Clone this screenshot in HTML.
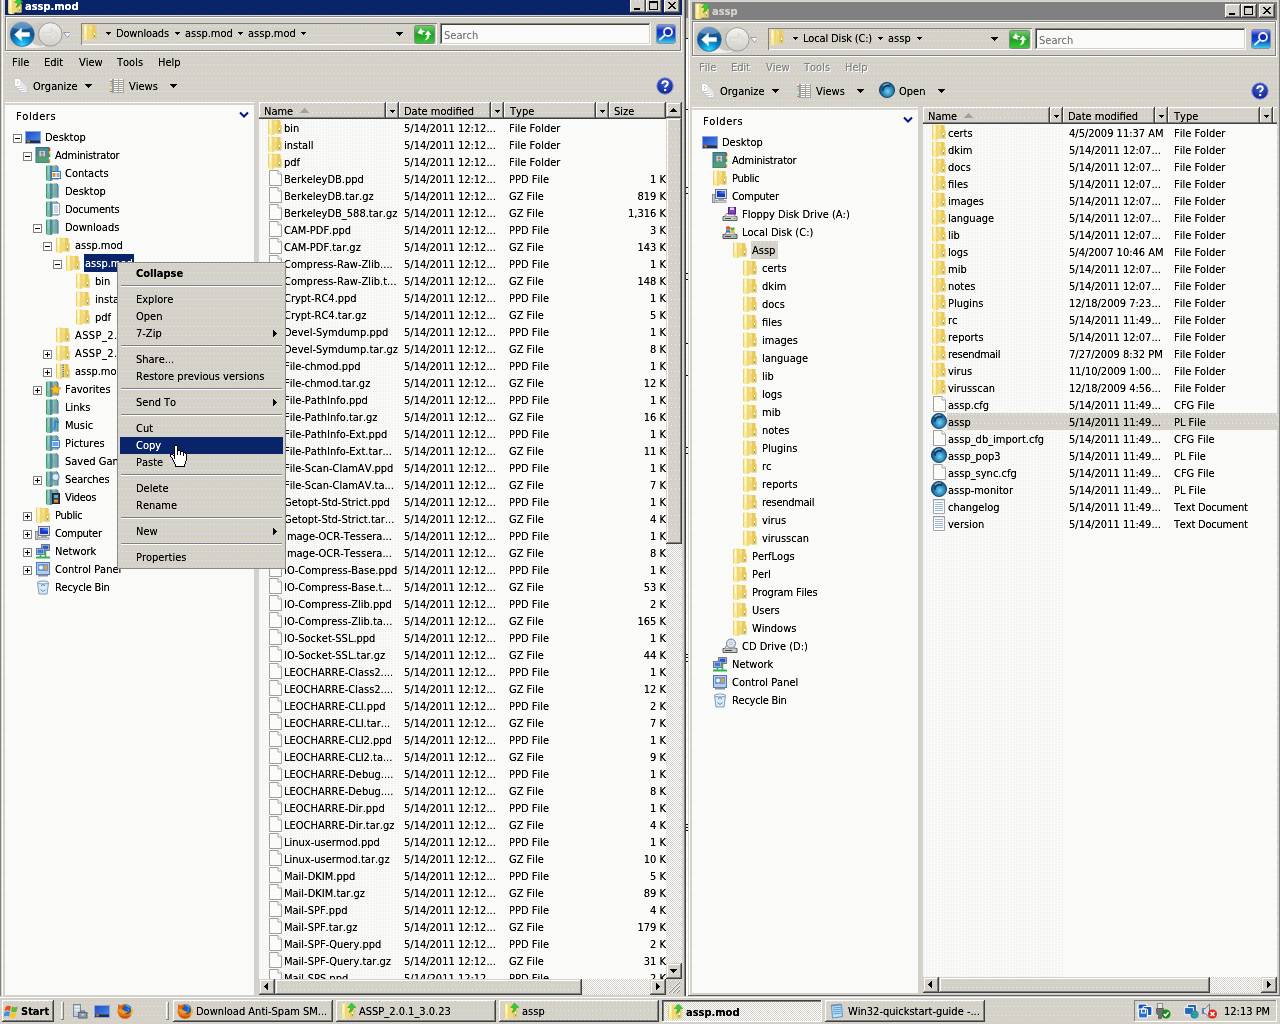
<!DOCTYPE html>
<html lang="en"><head><meta charset="utf-8"><title>assp.mod</title><style>
html,body{margin:0;padding:0}
body{width:1280px;height:1024px;overflow:hidden;background:#d4d1ca;position:relative;
 font:11px/13px "DejaVu Sans Condensed","Liberation Sans","DejaVu Sans",sans-serif;color:#000}
.L{position:absolute;left:0;top:0;width:1280px;height:1024px;overflow:hidden}
.L div{position:absolute}
.L span{position:absolute;display:block;white-space:pre;line-height:13px;font-kerning:none}
.L span.bold{font-weight:bold}
.L span.fold{letter-spacing:.6px}
.L svg.ic{position:absolute;display:block;overflow:visible}
.clip{position:absolute;left:0;top:0;overflow:hidden}
.T{filter:url(#crisp)}
</style></head><body>
<svg width="0" height="0" style="position:absolute"><defs><filter id="crisp" x="0" y="0" width="100%" height="100%" color-interpolation-filters="sRGB"><feComponentTransfer><feFuncA type="linear" slope="1.35" intercept="-0.04"/></feComponentTransfer></filter><pattern id="dth" width="12" height="9" patternUnits="userSpaceOnUse"><rect x="1" y="1" width="1" height="1" fill="#ecebe8"/><rect x="5" y="1" width="1" height="1" fill="#ecebe8"/><rect x="9" y="1" width="1" height="1" fill="#ecebe8"/><rect x="0" y="6" width="1" height="1" fill="#ecdcaa"/><rect x="3" y="6" width="1" height="1" fill="#ecdcaa"/><rect x="6" y="6" width="1" height="1" fill="#ecdcaa"/><rect x="9" y="6" width="1" height="1" fill="#ecdcaa"/></pattern><pattern id="dtn" width="6" height="4" patternUnits="userSpaceOnUse"><rect x="0" y="0" width="1" height="1" fill="#ebebe9"/><rect x="3" y="0" width="1" height="1" fill="#ebebe9"/><rect x="1" y="2" width="1" height="1" fill="#ebebe9"/><rect x="4" y="2" width="1" height="1" fill="#ebebe9"/></pattern>
<linearGradient id="g-fold" x1="0" y1="0" x2="1" y2="0"><stop offset="0" stop-color="#f3dc7c"/><stop offset=".35" stop-color="#fbf3b4"/><stop offset=".5" stop-color="#e9c85c"/><stop offset="1" stop-color="#f0d56e"/></linearGradient>
<linearGradient id="g-tfold" x1="0" y1="0" x2="1" y2="0"><stop offset="0" stop-color="#5fa285"/><stop offset=".35" stop-color="#8ec3b0"/><stop offset=".5" stop-color="#4f8f86"/><stop offset="1" stop-color="#6aa7a0"/></linearGradient>
<radialGradient id="g-back" cx=".5" cy=".95" r=".9"><stop offset="0" stop-color="#2ee0ff"/><stop offset=".35" stop-color="#0a8fd0"/><stop offset=".7" stop-color="#0d4f8c"/><stop offset="1" stop-color="#3a78b0"/></radialGradient>
<linearGradient id="g-fwd" x1="0" y1="0" x2="0" y2="1"><stop offset="0" stop-color="#f4f4f2"/><stop offset="1" stop-color="#d0cec8"/></linearGradient>
<linearGradient id="g-ref" x1="0" y1="0" x2="0" y2="1"><stop offset="0" stop-color="#6fd06f"/><stop offset=".5" stop-color="#1fa01f"/><stop offset="1" stop-color="#3cc83c"/></linearGradient>
<linearGradient id="g-srch" x1="0" y1="0" x2="0" y2="1"><stop offset="0" stop-color="#9aa4e8"/><stop offset=".3" stop-color="#1030c8"/><stop offset=".6" stop-color="#0a50c8"/><stop offset="1" stop-color="#40d8f0"/></linearGradient>
<radialGradient id="g-help" cx=".5" cy=".3" r=".8"><stop offset="0" stop-color="#4060d0"/><stop offset="1" stop-color="#0a1a8c"/></radialGradient>
<radialGradient id="g-pl" cx=".55" cy=".6" r=".6"><stop offset="0" stop-color="#7fd0ea"/><stop offset=".5" stop-color="#2a8cc0"/><stop offset="1" stop-color="#0b3c6a"/></radialGradient>
<linearGradient id="g-desk" x1="0" y1="0" x2="1" y2="1"><stop offset="0" stop-color="#1f48c8"/><stop offset="1" stop-color="#4f90e8"/></linearGradient>
<radialGradient id="g-ff" cx=".5" cy=".5" r=".6"><stop offset="0" stop-color="#3a6fd8"/><stop offset=".55" stop-color="#2a50b0"/><stop offset=".6" stop-color="#f08018"/><stop offset="1" stop-color="#d85a08"/></radialGradient>
<symbol id="i-folder" viewBox="0 0 16 16"><path d="M6 1h7l.5 1v4h1v8.500h-8.500z" fill="#f1d872"/><path d="M10 1h3l.5 1v4h1v8.500h-4.500z" fill="#e9c658" opacity=".8"/><path d="M1 .5h5l1.500 1v13.500l-1.500 1h-3.500l-1.500-1z" fill="#f8eca0"/><path d="M5 .5h1l1.500 1v13.500l-1.500 1h-1z" fill="#efd67a"/><path d="M1.500 1v14" stroke="#ecd070" stroke-width="1"/><path d="M3.500 1.500v8" stroke="#fff" stroke-width="1.200" opacity=".75"/><path d="M9 2.500v3" stroke="#fff" stroke-width="1" opacity=".6"/><rect x="12" y="9" width="1" height="2" fill="#fffdf0"/><rect x="12" y="11" width="1" height="2" fill="#4aaee6"/></symbol><symbol id="i-tfolder" viewBox="0 0 16 16"><path d="M6 .5h5.500l1.500 1.500v12.500h-7z" fill="#8ab8a4"/><path d="M9.500 .5h2l1.500 1.500v12.500h-3.500z" fill="#74a59c" opacity=".8"/><path d="M11.500 .5l1.500 1.500v12.500" fill="none" stroke="#2c6cb4" stroke-width="1"/><path d="M1 .5h5l1.500 1v13.500l-1.500 1h-3.500l-1.500-1z" fill="#7cc0a0"/><path d="M5 .5h1l1.500 1v13.500l-1.500 1h-1z" fill="#4a88a0"/><path d="M1.500 1v14" stroke="#3f9a6c" stroke-width="1"/><path d="M3.500 1.500v8" stroke="#a8c8f0" stroke-width="1.200" opacity=".75"/><path d="M9 2.500v3" stroke="#a8c8f0" stroke-width="1" opacity=".6"/></symbol><symbol id="i-zipfolder" viewBox="0 0 16 16"><path d="M6 1h7l.5 1v4h1v8.500h-8.500z" fill="#f1d872"/><path d="M10 1h3l.5 1v4h1v8.500h-4.500z" fill="#e9c658" opacity=".8"/><path d="M1 .5h5l1.500 1v13.500l-1.500 1h-3.500l-1.500-1z" fill="#f8eca0"/><path d="M5 .5h1l1.500 1v13.500l-1.500 1h-1z" fill="#efd67a"/><path d="M1.500 1v14" stroke="#ecd070" stroke-width="1"/><path d="M3.500 1.500v8" stroke="#fff" stroke-width="1.200" opacity=".75"/><path d="M9 2.500v3" stroke="#fff" stroke-width="1" opacity=".6"/><rect x="12" y="9" width="1" height="2" fill="#fffdf0"/><rect x="12" y="11" width="1" height="2" fill="#4aaee6"/><path d="M11.500 0l4.500 4.500h-2.500q-.5 3.500-4.500 5l1.500-3l-.5-2h-2.500z" fill="#38c838" stroke="#18a018" stroke-width=".5"/></symbol><symbol id="i-zip" viewBox="0 0 16 16"><path d="M6 1h7l.5 1v4h1v8.500h-8.500z" fill="#f0d46a"/><path d="M10 1h3l.5 1v4h1v8.500h-4.500z" fill="#e6be4c" opacity=".8"/><path d="M1 .5h5l1.500 1v13.500l-1.500 1h-3.500l-1.500-1z" fill="#f9eea6"/><path d="M5 .5h1l1.500 1v13.500l-1.500 1h-1z" fill="#ecd070"/><path d="M1.500 1v14" stroke="#e8c860" stroke-width="1"/><path d="M3.500 1.500v8" stroke="#fff" stroke-width="1.200" opacity=".75"/><path d="M9 2.500v3" stroke="#fff" stroke-width="1" opacity=".6"/><rect x="12" y="9" width="1" height="2" fill="#fffdf0"/><rect x="12" y="11" width="1" height="2" fill="#4aaee6"/><path d="M8 1.500v13" stroke="#5878a8" stroke-width="2" stroke-dasharray="1.200 1"/><path d="M7 1.500v13" stroke="#f4f4f4" stroke-width=".8" stroke-dasharray="1 1.200"/></symbol><symbol id="i-file" viewBox="0 0 16 16"><path d="M2.500 .5h8.500l3.500 3.500v11.500h-12z" fill="#fbfbf9" stroke="#a29c9c"/><path d="M11 .5v3.500h3.500" fill="#fdfdfd" stroke="#a8a2a2"/></symbol><symbol id="i-txt" viewBox="0 0 16 16"><path d="M2.500 1.500h11v14h-11z" fill="#fff" stroke="#a0a4b0"/><path d="M4 4.500h8M4 6.500h8M4 8.500h8M4 10.500h8M4 12.500h8" stroke="#9ab8e0" stroke-width="1"/><path d="M3 1v1.500M5 1v1.500M7 1v1.500M9 1v1.500M11 1v1.500M13 1v1.500" stroke="#808890" stroke-width=".8"/></symbol><symbol id="i-notepad" viewBox="0 0 16 16"><path d="M2.500 2.500l10-1l1 12l-10 1.500z" fill="#bfe0f8" stroke="#6090c0"/><path d="M4 5l8-.8M4 7l8-.8M4.200 9l8-.8M4.400 11l8-.8" stroke="#5aa0d8" stroke-width="1"/><path d="M3 1.500v2M5 1.300v2M7 1.100v2M9 .9v2M11 .7v2" stroke="#606870" stroke-width=".8"/></symbol><symbol id="i-pl" viewBox="0 0 16 16"><circle cx="8" cy="8" r="7.600" fill="url(#g-pl)" stroke="#0a3058" stroke-width=".8"/><path d="M4 9a4.500 4.500 0 0 1 7-4.500" fill="none" stroke="#0a2a50" stroke-width="1.500" opacity=".8"/><path d="M4 4a6 6 0 0 1 6-2" stroke="#a8d8f0" stroke-width="1.200" fill="none" opacity=".7"/></symbol><symbol id="i-desktop" viewBox="0 0 16 16"><rect x=".5" y="2.500" width="15" height="12" fill="url(#g-desk)" stroke="#88a8e0" stroke-width="1"/><rect x="1" y="11.500" width="14" height="2.500" fill="#282c38"/><circle cx="3" cy="12" r="1.500" fill="#e04020"/><circle cx="4" cy="12.500" r="1" fill="#40c040"/></symbol><symbol id="i-user" viewBox="0 0 16 16"><rect x="1" y=".5" width="13" height="15" fill="#4c8c8a" stroke="#2f6f88" stroke-width="1"/><rect x="1.500" y="10" width="12" height="5.500" fill="#55a070"/><rect x="4" y="3.500" width="6.500" height="6.500" fill="#c8d0d8" stroke="#5878a0" stroke-width=".8"/><circle cx="7.250" cy="6" r="1.500" fill="#a08060"/><path d="M5 9.500q2.250-3 4.500 0z" fill="#40a040"/><path d="M14.500 1v3" stroke="#e03020" stroke-width="1.500"/><path d="M14.500 4v3" stroke="#f0c020" stroke-width="1.500"/><path d="M14.500 7v3" stroke="#30b030" stroke-width="1.500"/><path d="M14.500 10v2.500" stroke="#f0f0f0" stroke-width="1.500"/><path d="M14.500 12.500v2.500" stroke="#f09020" stroke-width="1.500"/></symbol><symbol id="i-contacts" viewBox="0 0 16 16"><path d="M6 .5h5.500l1.500 1.500v12.500h-7z" fill="#8ab8a4"/><path d="M9.500 .5h2l1.500 1.500v12.500h-3.500z" fill="#74a59c" opacity=".8"/><path d="M11.500 .5l1.500 1.500v12.500" fill="none" stroke="#2c6cb4" stroke-width="1"/><path d="M1 .5h5l1.500 1v13.500l-1.500 1h-3.500l-1.500-1z" fill="#7cc0a0"/><path d="M5 .5h1l1.500 1v13.500l-1.500 1h-1z" fill="#4a88a0"/><path d="M1.500 1v14" stroke="#3f9a6c" stroke-width="1"/><path d="M3.500 1.500v8" stroke="#a8c8f0" stroke-width="1.200" opacity=".75"/><path d="M9 2.500v3" stroke="#a8c8f0" stroke-width="1" opacity=".6"/><rect x="6.500" y="6.500" width="9" height="7" fill="#fff" stroke="#2878d0"/><rect x="7.500" y="8" width="3" height="4" fill="#f09010"/><path d="M11.500 9h3M11.500 11h3" stroke="#2858c8" stroke-width="1"/></symbol><symbol id="i-docs" viewBox="0 0 16 16"><path d="M6 .5h5.500l1.500 1.500v12.500h-7z" fill="#8ab8a4"/><path d="M9.500 .5h2l1.500 1.500v12.500h-3.500z" fill="#74a59c" opacity=".8"/><path d="M11.500 .5l1.500 1.500v12.500" fill="none" stroke="#2c6cb4" stroke-width="1"/><path d="M1 .5h5l1.500 1v13.500l-1.500 1h-3.500l-1.500-1z" fill="#7cc0a0"/><path d="M5 .5h1l1.500 1v13.500l-1.500 1h-1z" fill="#4a88a0"/><path d="M1.500 1v14" stroke="#3f9a6c" stroke-width="1"/><path d="M3.500 1.500v8" stroke="#a8c8f0" stroke-width="1.200" opacity=".75"/><path d="M9 2.500v3" stroke="#a8c8f0" stroke-width="1" opacity=".6"/><rect x="7.500" y="2.500" width="7" height="11" fill="#fff" stroke="#a0a8b0"/><path d="M9 5h4M9 7h4M9 9h4M9 11h4" stroke="#80a0d0" stroke-width=".8"/></symbol><symbol id="i-fav" viewBox="0 0 16 16"><path d="M6 .5h5.500l1.500 1.500v12.500h-7z" fill="#8ab8a4"/><path d="M9.500 .5h2l1.500 1.500v12.500h-3.500z" fill="#74a59c" opacity=".8"/><path d="M11.500 .5l1.500 1.500v12.500" fill="none" stroke="#2c6cb4" stroke-width="1"/><path d="M1 .5h5l1.500 1v13.500l-1.500 1h-3.500l-1.500-1z" fill="#7cc0a0"/><path d="M5 .5h1l1.500 1v13.500l-1.500 1h-1z" fill="#4a88a0"/><path d="M1.500 1v14" stroke="#3f9a6c" stroke-width="1"/><path d="M3.500 1.500v8" stroke="#a8c8f0" stroke-width="1.200" opacity=".75"/><path d="M9 2.500v3" stroke="#a8c8f0" stroke-width="1" opacity=".6"/><path d="M10.500 3l1.700 3.600l3.800.4l-2.800 2.600l.8 3.900l-3.500-2l-3.500 2l.8-3.900l-2.800-2.600l3.800-.4z" fill="#f8c020" stroke="#d08010" stroke-width=".6"/></symbol><symbol id="i-music" viewBox="0 0 16 16"><path d="M6 .5h5.500l1.500 1.500v12.500h-7z" fill="#8ab8a4"/><path d="M9.500 .5h2l1.500 1.500v12.500h-3.500z" fill="#74a59c" opacity=".8"/><path d="M11.500 .5l1.500 1.500v12.500" fill="none" stroke="#2c6cb4" stroke-width="1"/><path d="M1 .5h5l1.500 1v13.500l-1.500 1h-3.500l-1.500-1z" fill="#7cc0a0"/><path d="M5 .5h1l1.500 1v13.500l-1.500 1h-1z" fill="#4a88a0"/><path d="M1.500 1v14" stroke="#3f9a6c" stroke-width="1"/><path d="M3.500 1.500v8" stroke="#a8c8f0" stroke-width="1.200" opacity=".75"/><path d="M9 2.500v3" stroke="#a8c8f0" stroke-width="1" opacity=".6"/><path d="M10 11v-7l4 1.500" stroke="#2080e0" stroke-width="1.500" fill="none"/><ellipse cx="8.800" cy="11.500" rx="2" ry="1.500" fill="#30a0f0"/></symbol><symbol id="i-pics" viewBox="0 0 16 16"><path d="M6 .5h5.500l1.500 1.500v12.500h-7z" fill="#8ab8a4"/><path d="M9.500 .5h2l1.500 1.500v12.500h-3.500z" fill="#74a59c" opacity=".8"/><path d="M11.500 .5l1.500 1.500v12.500" fill="none" stroke="#2c6cb4" stroke-width="1"/><path d="M1 .5h5l1.500 1v13.500l-1.500 1h-3.500l-1.500-1z" fill="#7cc0a0"/><path d="M5 .5h1l1.500 1v13.500l-1.500 1h-1z" fill="#4a88a0"/><path d="M1.500 1v14" stroke="#3f9a6c" stroke-width="1"/><path d="M3.500 1.500v8" stroke="#a8c8f0" stroke-width="1.200" opacity=".75"/><path d="M9 2.500v3" stroke="#a8c8f0" stroke-width="1" opacity=".6"/><rect x="6.500" y="5.500" width="8" height="7" fill="#e8f0f8" stroke="#5080c0"/><rect x="7.500" y="7" width="6" height="4" fill="#60a8e8"/></symbol><symbol id="i-searches" viewBox="0 0 16 16"><path d="M6 .5h5.500l1.500 1.500v12.500h-7z" fill="#8ab8a4"/><path d="M9.500 .5h2l1.500 1.500v12.500h-3.500z" fill="#74a59c" opacity=".8"/><path d="M11.500 .5l1.500 1.500v12.500" fill="none" stroke="#2c6cb4" stroke-width="1"/><path d="M1 .5h5l1.500 1v13.500l-1.500 1h-3.500l-1.500-1z" fill="#7cc0a0"/><path d="M5 .5h1l1.500 1v13.500l-1.500 1h-1z" fill="#4a88a0"/><path d="M1.500 1v14" stroke="#3f9a6c" stroke-width="1"/><path d="M3.500 1.500v8" stroke="#a8c8f0" stroke-width="1.200" opacity=".75"/><path d="M9 2.500v3" stroke="#a8c8f0" stroke-width="1" opacity=".6"/><circle cx="10.500" cy="6" r="3.500" fill="#d8ecf8" stroke="#7090b0" stroke-width="1.200"/><path d="M8 9l-3 4.500" stroke="#7090b0" stroke-width="1.800"/></symbol><symbol id="i-videos" viewBox="0 0 16 16"><path d="M6 .5h5.500l1.500 1.500v12.500h-7z" fill="#8ab8a4"/><path d="M9.500 .5h2l1.500 1.500v12.500h-3.500z" fill="#74a59c" opacity=".8"/><path d="M11.500 .5l1.500 1.500v12.500" fill="none" stroke="#2c6cb4" stroke-width="1"/><path d="M1 .5h5l1.500 1v13.500l-1.500 1h-3.500l-1.500-1z" fill="#7cc0a0"/><path d="M5 .5h1l1.500 1v13.500l-1.500 1h-1z" fill="#4a88a0"/><path d="M1.500 1v14" stroke="#3f9a6c" stroke-width="1"/><path d="M3.500 1.500v8" stroke="#a8c8f0" stroke-width="1.200" opacity=".75"/><path d="M9 2.500v3" stroke="#a8c8f0" stroke-width="1" opacity=".6"/><rect x="7.500" y="4.500" width="7" height="10" fill="#303840" stroke="#202428"/><rect x="9" y="6" width="4" height="3" fill="#60b0e0"/><rect x="9" y="10.500" width="4" height="3" fill="#e09040"/></symbol><symbol id="i-computer" viewBox="0 0 16 16"><rect x="3.500" y="1.500" width="11" height="9" fill="#d8dce4" stroke="#707888"/><rect x="5" y="3" width="8" height="6" fill="#1838c8"/><path d="M6 5l4-2h3v3z" fill="#4878e8"/><rect x="6" y="11" width="6" height="1.500" fill="#a0a4ac"/><rect x="4" y="12.500" width="10" height="2" fill="#d0d4dc" stroke="#808890" stroke-width=".6"/><rect x=".5" y="6.500" width="2.500" height="8" fill="#c8ccd4" stroke="#707888" stroke-width=".8"/></symbol><symbol id="i-network" viewBox="0 0 16 16"><rect x="6.500" y="1.500" width="8" height="6" fill="#d8dce4" stroke="#707888"/><rect x="7.500" y="2.500" width="6" height="4" fill="#2858d0"/><rect x="1.500" y="5.500" width="8" height="6" fill="#d8dce4" stroke="#707888"/><rect x="2.500" y="6.500" width="6" height="4" fill="#3878e0"/><path d="M1 14.500h14" stroke="#30b050" stroke-width="2"/><path d="M5.500 12v2.500M10.500 8v6" stroke="#30b050" stroke-width="1.500"/></symbol><symbol id="i-cpanel" viewBox="0 0 16 16"><rect x="1.500" y="1.500" width="13" height="12" fill="#b8cce8" stroke="#5078b0"/><rect x="3" y="3" width="10" height="7" fill="#6898e0"/><circle cx="6" cy="6.500" r="2" fill="#f0f4f8"/><rect x="9" y="4.500" width="3" height="4" fill="#e8a030"/><rect x="3" y="13.500" width="10" height="2" fill="#8090a8"/></symbol><symbol id="i-recycle" viewBox="0 0 16 16"><path d="M2.500 3.500h11l-1.500 11.500h-8z" fill="#dceaf6" stroke="#7898b8" stroke-width="1" opacity=".95"/><ellipse cx="8" cy="3.500" rx="5.500" ry="1.500" fill="#eef6fc" stroke="#7898b8"/><path d="M6 7l2-1.500l2 1.500M5.500 10.500l2.500 2l2.500-2" stroke="#4890d0" stroke-width="1" fill="none"/></symbol><symbol id="i-floppy" viewBox="0 0 16 16"><path d="M1 10.500h14v4h-14z" fill="#d0d0d0" stroke="#606060"/><path d="M2.500 10.500l2-3h7l2 3" fill="#e8e8e8" stroke="#808080"/><rect x="3" y="12" width="6" height="1" fill="#404040"/><rect x="11.500" y="12" width="2" height="1" fill="#30c030"/><rect x="6.500" y="1.500" width="7" height="6.500" fill="#8040c0" stroke="#502090"/><rect x="8" y="1.500" width="4" height="2.500" fill="#e0e0e8"/></symbol><symbol id="i-disk" viewBox="0 0 16 16"><path d="M1 10.500h14v4h-14z" fill="#b8b8b8" stroke="#505050"/><path d="M2.500 10.500l2-2.500h7l2 2.500" fill="#e0e0e0" stroke="#808080"/><rect x="3" y="12" width="6" height="1" fill="#404040"/><rect x="11.500" y="12" width="2" height="1" fill="#30c030"/><path d="M4 3q2-1.500 4 0v3q-2-1.500-4 0z" fill="#e04820"/><path d="M8.500 3q2 1.500 4 0v3q-2 1.500-4 0z" fill="#50b030"/><path d="M4 6.500q2-1.500 4 0v2q-2-1-4 0z" fill="#2878e0"/><path d="M8.500 6.500q2 1.500 4 0v2q-2 1-4 0z" fill="#f0b820"/></symbol><symbol id="i-cd" viewBox="0 0 16 16"><path d="M1 10.500h14v4h-14z" fill="#c8c8c8" stroke="#606060"/><path d="M2.500 10.500l2-2.500h7l2 2.500" fill="#e8e8e8" stroke="#808080"/><rect x="3" y="12" width="7" height="1" fill="#404040"/><circle cx="9" cy="5.500" r="4.500" fill="#e0e4ec" stroke="#7080a0"/><circle cx="9" cy="5.500" r="1.300" fill="#fff" stroke="#8090a8" stroke-width=".6"/></symbol><symbol id="i-winflag" viewBox="0 0 16 16"><path d="M1.500 4q3-2 5.500-.5l-1 4.500q-3-1.500-5.500.5z" fill="#e85020"/><path d="M8 3.500q3 1.500 6 0l-1.500 5q-2.500 1.500-5.500 0z" fill="#60b838"/><path d="M.5 9.500q3-2 5.500-.5l-1 4.500q-3-1.500-5.500.5z" fill="#3890e8"/><path d="M6.500 9.500q3 1.500 6 0l-1.500 5q-2.500 1.500-5.500 0z" fill="#f8c820"/></symbol><symbol id="i-server" viewBox="0 0 16 16"><rect x="1.500" y="1.500" width="7" height="12" fill="#c0ccd8" stroke="#7888a0"/><rect x="2.500" y="3" width="5" height="1.500" fill="#f0f4f8"/><rect x="2.500" y="6" width="5" height="1.500" fill="#f0f4f8"/><rect x="6.500" y="9.500" width="8.500" height="5.500" fill="#8898a8" stroke="#586878"/><rect x="9" y="8" width="3.500" height="1.500" fill="none" stroke="#586878"/><rect x="9.500" y="11" width="2.500" height="1.500" fill="#d0d8e0"/></symbol><symbol id="i-firefox" viewBox="0 0 16 16"><circle cx="8" cy="8.500" r="7.500" fill="#e27212"/><path d="M2 12a7.500 7.500 0 0 0 12 0q-6 3-12 0z" fill="#c84a08"/><circle cx="9.500" cy="6.500" r="4.700" fill="#1c5cc0"/><path d="M8 2.200q4-.8 5.500 3q-3-1.500-5.500-3z" fill="#58b4f0"/><path d="M10 5q2.500 1 2 4q-1-2-2-4z" fill="#40a0e8"/><path d="M1 6.500q3.500-1.500 6 1q1.500 1.500 4 .8q-1.200 3-4.500 2.700q-3.500-.5-5.500-4.500z" fill="#f29a24"/><path d="M1.200 1l3.300 2.200l-3 3.300q-.8-3-.3-5.500z" fill="#e06410"/><path d="M4.500 3.200l2.500-.7l-.5 2.500z" fill="#d85808"/><path d="M14 4.500q2 4-.5 8" stroke="#f8bc28" stroke-width="1.300" fill="none"/></symbol><symbol id="i-vm" viewBox="0 0 16 16"><rect x="1" y="1" width="9" height="9" rx="1.500" fill="#1858b8" stroke="#fff" stroke-width="1.200"/><rect x="6" y="3.500" width="9" height="9" rx="1.500" fill="#1858b8" stroke="#fff" stroke-width="1.200"/><rect x="1.500" y="6" width="9" height="9" rx="1.500" fill="#2870d0" stroke="#fff" stroke-width="1.200"/><rect x="4.500" y="6" width="4" height="4" fill="none" stroke="#fff" stroke-width="1"/></symbol><symbol id="i-usb" viewBox="0 0 16 16"><rect x="2.500" y=".5" width="5" height="5" fill="#e8e8e8" stroke="#909090"/><path d="M1.500 5.500h7v5l-2 2v3h-3v-3l-2-2z" fill="#707070" stroke="#404040" stroke-width=".6"/><circle cx="11" cy="11" r="4.500" fill="#188a18"/><path d="M8.800 11l1.700 1.800l3-3.600" stroke="#fff" stroke-width="1.500" fill="none"/></symbol><symbol id="i-net2" viewBox="0 0 16 16"><rect x="4.500" y="1.500" width="9" height="7" fill="#1858a8" stroke="#e8ecf0" stroke-width="1.200"/><rect x="1.500" y="4.500" width="9" height="7" fill="#2068b8" stroke="#e8ecf0" stroke-width="1.200"/><rect x="3" y="12.500" width="6" height="1.500" fill="#d8dce0"/><circle cx="11.500" cy="11.500" r="4" fill="#2080e0"/><path d="M9 10q2-1.500 3 0t3 0M9.500 13q1.500-1 2.500 0t2-.5" stroke="#30c040" stroke-width="1.500" fill="none"/></symbol><symbol id="i-vol" viewBox="0 0 16 16"><path d="M1.500 5.500h3l4-4.500v14l-4-4.500h-3z" fill="#d8dce4" stroke="#606878" stroke-width=".8"/><rect x="1.500" y="5.500" width="1.500" height="5" fill="#5080d0"/><circle cx="11.500" cy="11" r="4.500" fill="#e02818"/><path d="M9.500 9l4 4M13.500 9l-4 4" stroke="#fff" stroke-width="1.600"/></symbol><symbol id="i-organize" viewBox="0 0 16 16"><path d="M6.5 6.5h4.500l2 2v6h-6.500z" fill="#fdfdfd" stroke="#c2c0c8" stroke-width=".8"/><path d="M4.5 4.5h4.500l2 2v6h-6.500z" fill="#fdfdfd" stroke="#c2c0c8" stroke-width=".8"/><path d="M2.5 2.5h4.500l2 2v6h-6.500z" fill="#fdfdfd" stroke="#c2c0c8" stroke-width=".8"/><path d="M0.5 0.5h4.500l2 2v6h-6.500z" fill="#fdfdfd" stroke="#c2c0c8" stroke-width=".8"/><path d="M3 3l1.500 1.500l-1.500 1.500" stroke="#b8b6c0" fill="none" stroke-width=".9"/></symbol><symbol id="i-views" viewBox="0 0 16 16"><rect x="3" y="0" width="11" height="14" fill="#a6a2a0"/><rect x="4" y="0" width="4" height="1" fill="#fff"/><rect x="9" y="0" width="4" height="1" fill="#fff"/><rect x="4" y="2" width="4" height="1" fill="#fff"/><rect x="9" y="2" width="4" height="1" fill="#fff"/><rect x="4" y="4" width="4" height="1" fill="#fff"/><rect x="9" y="4" width="4" height="1" fill="#fff"/><rect x="4" y="6" width="4" height="1" fill="#fff"/><rect x="9" y="6" width="4" height="1" fill="#fff"/><rect x="4" y="8" width="4" height="1" fill="#fff"/><rect x="9" y="8" width="4" height="1" fill="#fff"/><rect x="4" y="10" width="4" height="1" fill="#fff"/><rect x="9" y="10" width="4" height="1" fill="#fff"/><rect x="4" y="12" width="4" height="1" fill="#fff"/><rect x="9" y="12" width="4" height="1" fill="#fff"/><rect x="0" y="0" width="2" height="1" fill="#e8f0f8"/><rect x="0" y="2" width="2" height="1" fill="#f06058"/><rect x="0" y="4" width="2" height="1" fill="#80c8f0"/><rect x="0" y="6" width="2" height="1" fill="#a8c850"/><rect x="0" y="8" width="2" height="1" fill="#f8f060"/><rect x="0" y="10" width="2" height="1" fill="#80c8f0"/><rect x="0" y="12" width="2" height="1" fill="#f06058"/><rect x="2" y="0" width="1" height="14" fill="#9098a0"/></symbol><symbol id="i-help" viewBox="0 0 18 18"><circle cx="9" cy="9" r="8.200" fill="url(#g-help)" stroke="#8890c8" stroke-width="1"/><path d="M6.300 7q0-2.800 2.800-2.800q2.600 0 2.600 2.300q0 1.500-1.500 2.300q-1 .6-1 1.700" fill="none" stroke="#fff" stroke-width="2"/><rect x="8.100" y="12" width="2.100" height="2.100" fill="#fff"/></symbol><symbol id="i-refresh" viewBox="0 0 21 19"><rect x=".5" y=".5" width="20" height="18" rx="2" fill="url(#g-ref)" stroke="#808880"/><path d="M3.500 8l3.500-5l1 2.500q2.500-.5 3 1.500q-2-.5-3 1l1.500 2z" fill="#fff"/><path d="M17.500 10l-3.500-4.500l-3.500 4.500h2.500q0 3.500-2.500 5.500q5-1 5-5.500z" fill="#f0fff0"/></symbol><symbol id="i-search" viewBox="0 0 20 20"><rect x=".5" y=".5" width="19" height="19" rx="2.500" fill="url(#g-srch)" stroke="#8890a8"/><circle cx="12" cy="8" r="4" fill="#1428b8" stroke="#f4f4f8" stroke-width="1.800"/><path d="M9 11l-5 4.500" stroke="#e8e8f0" stroke-width="2" stroke-linecap="round"/></symbol><symbol id="i-nav" viewBox="0 0 68 30"><path d="M8 4q12-5 22 2q6-4 12-2l0 22q-6 3-12-2q-10 6-22 2q-6-11 0-22z" fill="#c8c6c0" opacity=".9"/><path d="M6 22q4 6 12 6q8-1 12-4q6 5 14 2l-2 2q-14 2-24 0q-8 0-12-6z" fill="#f0f0ee"/><circle cx="20.300" cy="15.400" r="12" fill="url(#g-back)" stroke="#3a6a98" stroke-width=".8"/><path d="M10 8a12 12 0 0 1 20 0q-10 5-20 0z" fill="#88b0d8" opacity=".55"/><path d="M12.500 15.500l7-6.500v4.500h8v4h-8v4.500z" fill="#fff" stroke="#e8e8e8" stroke-width=".5"/><circle cx="48.300" cy="15.400" r="11.800" fill="url(#g-fwd)" stroke="#9a98a0" stroke-width="1"/><path d="M56 15.500l-7-6.500v4.500h-8v4h8v4.500z" fill="#e4e2de" stroke="#d0cec8" stroke-width=".6"/><path d="M61.500 13.500h8l-4 5z" fill="#f6f6f6" stroke="#8e90a8" stroke-width=".9"/></symbol></defs></svg>
<div class="L" id="bg">
<div style="left:0px;top:0px;width:1px;height:996px;background:#808080;"></div>
<div style="left:686px;top:0px;width:2px;height:996px;background:#fff;"></div>
<div style="left:686px;top:0px;width:2px;height:18px;background:#808080;"></div>
<div style="left:686px;top:18px;width:2px;height:20px;background:#d4d1ca;"></div>
<div style="left:686px;top:38px;width:2px;height:1px;background:#000;"></div>
<div style="left:686px;top:109px;width:2px;height:1px;background:#000;"></div>
<div style="left:686px;top:187px;width:2px;height:1px;background:#000;"></div>
<div style="left:686px;top:193px;width:2px;height:1px;background:#000;"></div>
<div style="left:686px;top:273px;width:2px;height:1px;background:#000;"></div>
<div style="left:686px;top:279px;width:2px;height:1px;background:#000;"></div>
<div style="left:686px;top:343px;width:2px;height:1px;background:#000;"></div>
<div style="left:686px;top:375px;width:2px;height:1px;background:#000;"></div>
<div style="left:686px;top:447px;width:2px;height:1px;background:#000;"></div>
<div style="left:686px;top:453px;width:2px;height:1px;background:#000;"></div>
<div style="left:686px;top:654px;width:2px;height:1px;background:#000;"></div>
<div style="left:686px;top:657px;width:2px;height:1px;background:#000;"></div>
<div style="left:686px;top:661px;width:2px;height:1px;background:#000;"></div>
<div style="left:686px;top:824px;width:2px;height:1px;background:#000;"></div>
<div style="left:686px;top:827px;width:2px;height:1px;background:#000;"></div>
<div style="left:686px;top:830px;width:2px;height:1px;background:#000;"></div>
<div style="left:1px;top:0px;width:685px;height:996px;background:#d4d1ca;"></div>
<svg class="ic" style="left:1px;top:0px" width="685" height="996" shape-rendering="crispEdges"><rect width="685" height="996" fill="url(#dth)"/></svg>
<div style="left:2px;top:0px;width:1px;height:996px;background:#ffffff;"></div>
<div style="left:684px;top:0px;width:1px;height:996px;background:#808080;"></div>
<div style="left:685px;top:0px;width:1px;height:996px;background:#404040;"></div>
<div style="left:5px;top:-3px;width:677px;height:18px;background:#0a246a;"></div>
<svg class="ic" style="left:7px;top:-2px" width="16" height="16"><use href="#i-zipfolder"/></svg>
<div style="left:630px;top:-1px;width:16px;height:14px;background:#d4d1ca;"></div>
<svg class="ic" style="left:630px;top:-1px" width="16" height="14" shape-rendering="crispEdges"><rect width="16" height="14" fill="url(#dth)"/></svg>
<div style="left:630px;top:-1px;width:15px;height:1px;background:#ffffff;"></div>
<div style="left:630px;top:-1px;width:1px;height:13px;background:#ffffff;"></div>
<div style="left:630px;top:12px;width:16px;height:1px;background:#404040;"></div>
<div style="left:645px;top:-1px;width:1px;height:14px;background:#404040;"></div>
<div style="left:631px;top:11px;width:14px;height:1px;background:#808080;"></div>
<div style="left:644px;top:0px;width:1px;height:12px;background:#808080;"></div>
<div style="left:646px;top:-1px;width:16px;height:14px;background:#d4d1ca;"></div>
<svg class="ic" style="left:646px;top:-1px" width="16" height="14" shape-rendering="crispEdges"><rect width="16" height="14" fill="url(#dth)"/></svg>
<div style="left:646px;top:-1px;width:15px;height:1px;background:#ffffff;"></div>
<div style="left:646px;top:-1px;width:1px;height:13px;background:#ffffff;"></div>
<div style="left:646px;top:12px;width:16px;height:1px;background:#404040;"></div>
<div style="left:661px;top:-1px;width:1px;height:14px;background:#404040;"></div>
<div style="left:647px;top:11px;width:14px;height:1px;background:#808080;"></div>
<div style="left:660px;top:0px;width:1px;height:12px;background:#808080;"></div>
<div style="left:664px;top:-1px;width:16px;height:14px;background:#d4d1ca;"></div>
<svg class="ic" style="left:664px;top:-1px" width="16" height="14" shape-rendering="crispEdges"><rect width="16" height="14" fill="url(#dth)"/></svg>
<div style="left:664px;top:-1px;width:15px;height:1px;background:#ffffff;"></div>
<div style="left:664px;top:-1px;width:1px;height:13px;background:#ffffff;"></div>
<div style="left:664px;top:12px;width:16px;height:1px;background:#404040;"></div>
<div style="left:679px;top:-1px;width:1px;height:14px;background:#404040;"></div>
<div style="left:665px;top:11px;width:14px;height:1px;background:#808080;"></div>
<div style="left:678px;top:0px;width:1px;height:12px;background:#808080;"></div>
<div style="left:634px;top:8px;width:6px;height:2px;background:#000;"></div>
<div style="left:649px;top:1px;width:9px;height:2px;background:#000;"></div>
<div style="left:649px;top:1px;width:1px;height:9px;background:#000;"></div>
<div style="left:657px;top:1px;width:1px;height:9px;background:#000;"></div>
<div style="left:649px;top:9px;width:9px;height:1px;background:#000;"></div>
<svg class="ic" style="left:668px;top:2px" width="8" height="7" shape-rendering="crispEdges"><path d="M0 0h2v1h1v1h2v-1h1v-1h2v1h-1v1h-1v1h-1v1h1v1h1v1h1v1h-2v-1h-1v-1h-2v1h-1v1h-2v-1h1v-1h1v-1h1v-1h-1v-1h-1v-1h-1z" fill="#000"/></svg>
<div style="left:5px;top:16px;width:677px;height:36px;background:#d4d1ca;"></div>
<svg class="ic" style="left:5px;top:16px" width="677" height="36" shape-rendering="crispEdges"><rect width="677" height="36" fill="url(#dth)"/></svg>
<div style="left:5px;top:16px;width:677px;height:1px;background:#808080;"></div>
<div style="left:6px;top:17px;width:675px;height:1px;background:#ffffff;"></div>
<div style="left:5px;top:50px;width:676px;height:1px;background:#808080;"></div>
<div style="left:5px;top:51px;width:677px;height:1px;background:#ffffff;"></div>
<div style="left:5px;top:16px;width:1px;height:35px;background:#808080;"></div>
<div style="left:6px;top:17px;width:1px;height:33px;background:#ffffff;"></div>
<div style="left:680px;top:17px;width:1px;height:34px;background:#808080;"></div>
<div style="left:681px;top:16px;width:1px;height:36px;background:#ffffff;"></div>
<svg class="ic" style="left:2px;top:19px" width="68" height="30"><use href="#i-nav"/></svg>
<div style="left:81px;top:23px;width:356px;height:1px;background:#808080;"></div>
<div style="left:81px;top:23px;width:1px;height:22px;background:#808080;"></div>
<div style="left:82px;top:44px;width:355px;height:1px;background:#ffffff;"></div>
<div style="left:436px;top:24px;width:1px;height:21px;background:#ffffff;"></div>
<svg class="ic" style="left:82px;top:24px" width="16" height="16"><use href="#i-folder"/></svg>
<div style="left:106px;top:32px;width:5px;height:1px;background:#000;"></div>
<div style="left:107px;top:33px;width:3px;height:1px;background:#000;"></div>
<div style="left:108px;top:34px;width:1px;height:1px;background:#000;"></div>
<div style="left:175px;top:32px;width:5px;height:1px;background:#000;"></div>
<div style="left:176px;top:33px;width:3px;height:1px;background:#000;"></div>
<div style="left:177px;top:34px;width:1px;height:1px;background:#000;"></div>
<div style="left:238px;top:32px;width:5px;height:1px;background:#000;"></div>
<div style="left:239px;top:33px;width:3px;height:1px;background:#000;"></div>
<div style="left:240px;top:34px;width:1px;height:1px;background:#000;"></div>
<div style="left:301px;top:32px;width:5px;height:1px;background:#000;"></div>
<div style="left:302px;top:33px;width:3px;height:1px;background:#000;"></div>
<div style="left:303px;top:34px;width:1px;height:1px;background:#000;"></div>
<div style="left:396px;top:32px;width:7px;height:1px;background:#000;"></div>
<div style="left:397px;top:33px;width:5px;height:1px;background:#000;"></div>
<div style="left:398px;top:34px;width:3px;height:1px;background:#000;"></div>
<div style="left:399px;top:35px;width:1px;height:1px;background:#000;"></div>
<svg class="ic" style="left:414px;top:25px" width="21" height="19"><use href="#i-refresh"/></svg>
<div style="left:440px;top:23px;width:211px;height:22px;background:#fafbf8;"></div>
<div style="left:440px;top:23px;width:210px;height:1px;background:#808080;"></div>
<div style="left:440px;top:23px;width:1px;height:21px;background:#808080;"></div>
<div style="left:441px;top:24px;width:208px;height:1px;background:#404040;"></div>
<div style="left:441px;top:24px;width:1px;height:19px;background:#404040;"></div>
<div style="left:440px;top:44px;width:211px;height:1px;background:#ffffff;"></div>
<div style="left:650px;top:23px;width:1px;height:22px;background:#ffffff;"></div>
<div style="left:441px;top:43px;width:209px;height:1px;background:#d4d1ca;"></div>
<div style="left:649px;top:24px;width:1px;height:20px;background:#d4d1ca;"></div>
<svg class="ic" style="left:656px;top:24px" width="20" height="20"><use href="#i-search"/></svg>
<svg class="ic" style="left:14px;top:78px" width="16" height="16"><use href="#i-organize"/></svg>
<div style="left:85px;top:84px;width:7px;height:1px;background:#000;"></div>
<div style="left:86px;top:85px;width:5px;height:1px;background:#000;"></div>
<div style="left:87px;top:86px;width:3px;height:1px;background:#000;"></div>
<div style="left:88px;top:87px;width:1px;height:1px;background:#000;"></div>
<svg class="ic" style="left:110px;top:79px" width="16" height="16"><use href="#i-views"/></svg>
<div style="left:170px;top:84px;width:7px;height:1px;background:#000;"></div>
<div style="left:171px;top:85px;width:5px;height:1px;background:#000;"></div>
<div style="left:172px;top:86px;width:3px;height:1px;background:#000;"></div>
<div style="left:173px;top:87px;width:1px;height:1px;background:#000;"></div>
<svg class="ic" style="left:656px;top:77px" width="18" height="18"><use href="#i-help"/></svg>
<div style="left:5px;top:102px;width:249px;height:1px;background:#ffffff;"></div>
<div style="left:5px;top:105px;width:249px;height:890px;background:#fafbf8;"></div>
<svg class="ic" style="left:239px;top:111px" width="10" height="7"><path d="M1 1.500l4 4l4-4" fill="none" stroke="#00138c" stroke-width="2"/></svg>
<div style="left:13px;top:134px;width:9px;height:9px;background:#808080;"></div>
<div style="left:14px;top:135px;width:7px;height:7px;background:#ffffff;"></div>
<div style="left:15px;top:138px;width:5px;height:1px;background:#000;"></div>
<svg class="ic" style="left:25px;top:129px" width="16" height="16"><use href="#i-desktop"/></svg>
<div style="left:23px;top:152px;width:9px;height:9px;background:#808080;"></div>
<div style="left:24px;top:153px;width:7px;height:7px;background:#ffffff;"></div>
<div style="left:25px;top:156px;width:5px;height:1px;background:#000;"></div>
<svg class="ic" style="left:35px;top:147px" width="16" height="16"><use href="#i-user"/></svg>
<svg class="ic" style="left:45px;top:165px" width="16" height="16"><use href="#i-contacts"/></svg>
<svg class="ic" style="left:45px;top:183px" width="16" height="16"><use href="#i-tfolder"/></svg>
<svg class="ic" style="left:45px;top:201px" width="16" height="16"><use href="#i-docs"/></svg>
<div style="left:33px;top:224px;width:9px;height:9px;background:#808080;"></div>
<div style="left:34px;top:225px;width:7px;height:7px;background:#ffffff;"></div>
<div style="left:35px;top:228px;width:5px;height:1px;background:#000;"></div>
<svg class="ic" style="left:45px;top:219px" width="16" height="16"><use href="#i-tfolder"/></svg>
<div style="left:43px;top:242px;width:9px;height:9px;background:#808080;"></div>
<div style="left:44px;top:243px;width:7px;height:7px;background:#ffffff;"></div>
<div style="left:45px;top:246px;width:5px;height:1px;background:#000;"></div>
<svg class="ic" style="left:55px;top:237px" width="16" height="16"><use href="#i-folder"/></svg>
<div style="left:53px;top:260px;width:9px;height:9px;background:#808080;"></div>
<div style="left:54px;top:261px;width:7px;height:7px;background:#ffffff;"></div>
<div style="left:55px;top:264px;width:5px;height:1px;background:#000;"></div>
<svg class="ic" style="left:65px;top:255px" width="16" height="16"><use href="#i-folder"/></svg>
<div style="left:84px;top:254px;width:50px;height:18px;background:#0a246a;"></div>
<svg class="ic" style="left:75px;top:273px" width="16" height="16"><use href="#i-folder"/></svg>
<svg class="ic" style="left:75px;top:291px" width="16" height="16"><use href="#i-folder"/></svg>
<svg class="ic" style="left:75px;top:309px" width="16" height="16"><use href="#i-folder"/></svg>
<svg class="ic" style="left:55px;top:327px" width="16" height="16"><use href="#i-folder"/></svg>
<div style="left:43px;top:350px;width:9px;height:9px;background:#808080;"></div>
<div style="left:44px;top:351px;width:7px;height:7px;background:#ffffff;"></div>
<div style="left:45px;top:354px;width:5px;height:1px;background:#000;"></div>
<div style="left:47px;top:352px;width:1px;height:5px;background:#000;"></div>
<svg class="ic" style="left:55px;top:345px" width="16" height="16"><use href="#i-folder"/></svg>
<div style="left:43px;top:368px;width:9px;height:9px;background:#808080;"></div>
<div style="left:44px;top:369px;width:7px;height:7px;background:#ffffff;"></div>
<div style="left:45px;top:372px;width:5px;height:1px;background:#000;"></div>
<div style="left:47px;top:370px;width:1px;height:5px;background:#000;"></div>
<svg class="ic" style="left:55px;top:363px" width="16" height="16"><use href="#i-zip"/></svg>
<div style="left:33px;top:386px;width:9px;height:9px;background:#808080;"></div>
<div style="left:34px;top:387px;width:7px;height:7px;background:#ffffff;"></div>
<div style="left:35px;top:390px;width:5px;height:1px;background:#000;"></div>
<div style="left:37px;top:388px;width:1px;height:5px;background:#000;"></div>
<svg class="ic" style="left:45px;top:381px" width="16" height="16"><use href="#i-fav"/></svg>
<svg class="ic" style="left:45px;top:399px" width="16" height="16"><use href="#i-tfolder"/></svg>
<svg class="ic" style="left:45px;top:417px" width="16" height="16"><use href="#i-music"/></svg>
<svg class="ic" style="left:45px;top:435px" width="16" height="16"><use href="#i-pics"/></svg>
<svg class="ic" style="left:45px;top:453px" width="16" height="16"><use href="#i-tfolder"/></svg>
<div style="left:33px;top:476px;width:9px;height:9px;background:#808080;"></div>
<div style="left:34px;top:477px;width:7px;height:7px;background:#ffffff;"></div>
<div style="left:35px;top:480px;width:5px;height:1px;background:#000;"></div>
<div style="left:37px;top:478px;width:1px;height:5px;background:#000;"></div>
<svg class="ic" style="left:45px;top:471px" width="16" height="16"><use href="#i-searches"/></svg>
<svg class="ic" style="left:45px;top:489px" width="16" height="16"><use href="#i-videos"/></svg>
<div style="left:23px;top:512px;width:9px;height:9px;background:#808080;"></div>
<div style="left:24px;top:513px;width:7px;height:7px;background:#ffffff;"></div>
<div style="left:25px;top:516px;width:5px;height:1px;background:#000;"></div>
<div style="left:27px;top:514px;width:1px;height:5px;background:#000;"></div>
<svg class="ic" style="left:35px;top:507px" width="16" height="16"><use href="#i-folder"/></svg>
<div style="left:23px;top:530px;width:9px;height:9px;background:#808080;"></div>
<div style="left:24px;top:531px;width:7px;height:7px;background:#ffffff;"></div>
<div style="left:25px;top:534px;width:5px;height:1px;background:#000;"></div>
<div style="left:27px;top:532px;width:1px;height:5px;background:#000;"></div>
<svg class="ic" style="left:35px;top:525px" width="16" height="16"><use href="#i-computer"/></svg>
<div style="left:23px;top:548px;width:9px;height:9px;background:#808080;"></div>
<div style="left:24px;top:549px;width:7px;height:7px;background:#ffffff;"></div>
<div style="left:25px;top:552px;width:5px;height:1px;background:#000;"></div>
<div style="left:27px;top:550px;width:1px;height:5px;background:#000;"></div>
<svg class="ic" style="left:35px;top:543px" width="16" height="16"><use href="#i-network"/></svg>
<div style="left:23px;top:566px;width:9px;height:9px;background:#808080;"></div>
<div style="left:24px;top:567px;width:7px;height:7px;background:#ffffff;"></div>
<div style="left:25px;top:570px;width:5px;height:1px;background:#000;"></div>
<div style="left:27px;top:568px;width:1px;height:5px;background:#000;"></div>
<svg class="ic" style="left:35px;top:561px" width="16" height="16"><use href="#i-cpanel"/></svg>
<svg class="ic" style="left:35px;top:579px" width="16" height="16"><use href="#i-recycle"/></svg>
<div style="left:259px;top:119px;width:407px;height:860px;background:#fafbf8;"></div>
<div style="left:259px;top:119px;width:140px;height:860px;background:#fafaf8;"></div>
<svg class="ic" style="left:259px;top:119px" width="140" height="860" shape-rendering="crispEdges"><rect width="140" height="860" fill="url(#dtn)"/></svg>
<div style="left:259px;top:102px;width:127px;height:17px;background:#d4d1ca;"></div>
<svg class="ic" style="left:259px;top:102px" width="127" height="17" shape-rendering="crispEdges"><rect width="127" height="17" fill="url(#dth)"/></svg>
<div style="left:259px;top:102px;width:127px;height:1px;background:#ffffff;"></div>
<div style="left:259px;top:102px;width:1px;height:16px;background:#ffffff;"></div>
<div style="left:259px;top:117px;width:127px;height:1px;background:#808080;"></div>
<div style="left:384px;top:103px;width:1px;height:15px;background:#808080;"></div>
<div style="left:259px;top:118px;width:127px;height:1px;background:#404040;"></div>
<div style="left:385px;top:102px;width:1px;height:17px;background:#404040;"></div>
<div style="left:304px;top:108px;width:1px;height:1px;background:#a4a09c;"></div>
<div style="left:303px;top:109px;width:3px;height:1px;background:#a4a09c;"></div>
<div style="left:302px;top:110px;width:5px;height:1px;background:#a4a09c;"></div>
<div style="left:301px;top:111px;width:7px;height:1px;background:#a4a09c;"></div>
<div style="left:300px;top:112px;width:9px;height:1px;background:#a4a09c;"></div>
<div style="left:386px;top:102px;width:13px;height:17px;background:#d4d1ca;"></div>
<svg class="ic" style="left:386px;top:102px" width="13" height="17" shape-rendering="crispEdges"><rect width="13" height="17" fill="url(#dth)"/></svg>
<div style="left:386px;top:102px;width:13px;height:1px;background:#ffffff;"></div>
<div style="left:386px;top:102px;width:1px;height:16px;background:#ffffff;"></div>
<div style="left:386px;top:117px;width:13px;height:1px;background:#808080;"></div>
<div style="left:397px;top:103px;width:1px;height:15px;background:#808080;"></div>
<div style="left:386px;top:118px;width:13px;height:1px;background:#404040;"></div>
<div style="left:398px;top:102px;width:1px;height:17px;background:#404040;"></div>
<div style="left:390px;top:110px;width:5px;height:1px;background:#000;"></div>
<div style="left:391px;top:111px;width:3px;height:1px;background:#000;"></div>
<div style="left:392px;top:112px;width:1px;height:1px;background:#000;"></div>
<div style="left:399px;top:102px;width:92px;height:17px;background:#d4d1ca;"></div>
<svg class="ic" style="left:399px;top:102px" width="92" height="17" shape-rendering="crispEdges"><rect width="92" height="17" fill="url(#dth)"/></svg>
<div style="left:399px;top:102px;width:92px;height:1px;background:#ffffff;"></div>
<div style="left:399px;top:102px;width:1px;height:16px;background:#ffffff;"></div>
<div style="left:399px;top:117px;width:92px;height:1px;background:#808080;"></div>
<div style="left:489px;top:103px;width:1px;height:15px;background:#808080;"></div>
<div style="left:399px;top:118px;width:92px;height:1px;background:#404040;"></div>
<div style="left:490px;top:102px;width:1px;height:17px;background:#404040;"></div>
<div style="left:491px;top:102px;width:13px;height:17px;background:#d4d1ca;"></div>
<svg class="ic" style="left:491px;top:102px" width="13" height="17" shape-rendering="crispEdges"><rect width="13" height="17" fill="url(#dth)"/></svg>
<div style="left:491px;top:102px;width:13px;height:1px;background:#ffffff;"></div>
<div style="left:491px;top:102px;width:1px;height:16px;background:#ffffff;"></div>
<div style="left:491px;top:117px;width:13px;height:1px;background:#808080;"></div>
<div style="left:502px;top:103px;width:1px;height:15px;background:#808080;"></div>
<div style="left:491px;top:118px;width:13px;height:1px;background:#404040;"></div>
<div style="left:503px;top:102px;width:1px;height:17px;background:#404040;"></div>
<div style="left:495px;top:110px;width:5px;height:1px;background:#000;"></div>
<div style="left:496px;top:111px;width:3px;height:1px;background:#000;"></div>
<div style="left:497px;top:112px;width:1px;height:1px;background:#000;"></div>
<div style="left:504px;top:102px;width:92px;height:17px;background:#d4d1ca;"></div>
<svg class="ic" style="left:504px;top:102px" width="92" height="17" shape-rendering="crispEdges"><rect width="92" height="17" fill="url(#dth)"/></svg>
<div style="left:504px;top:102px;width:92px;height:1px;background:#ffffff;"></div>
<div style="left:504px;top:102px;width:1px;height:16px;background:#ffffff;"></div>
<div style="left:504px;top:117px;width:92px;height:1px;background:#808080;"></div>
<div style="left:594px;top:103px;width:1px;height:15px;background:#808080;"></div>
<div style="left:504px;top:118px;width:92px;height:1px;background:#404040;"></div>
<div style="left:595px;top:102px;width:1px;height:17px;background:#404040;"></div>
<div style="left:596px;top:102px;width:13px;height:17px;background:#d4d1ca;"></div>
<svg class="ic" style="left:596px;top:102px" width="13" height="17" shape-rendering="crispEdges"><rect width="13" height="17" fill="url(#dth)"/></svg>
<div style="left:596px;top:102px;width:13px;height:1px;background:#ffffff;"></div>
<div style="left:596px;top:102px;width:1px;height:16px;background:#ffffff;"></div>
<div style="left:596px;top:117px;width:13px;height:1px;background:#808080;"></div>
<div style="left:607px;top:103px;width:1px;height:15px;background:#808080;"></div>
<div style="left:596px;top:118px;width:13px;height:1px;background:#404040;"></div>
<div style="left:608px;top:102px;width:1px;height:17px;background:#404040;"></div>
<div style="left:600px;top:110px;width:5px;height:1px;background:#000;"></div>
<div style="left:601px;top:111px;width:3px;height:1px;background:#000;"></div>
<div style="left:602px;top:112px;width:1px;height:1px;background:#000;"></div>
<div style="left:609px;top:102px;width:57px;height:17px;background:#d4d1ca;"></div>
<svg class="ic" style="left:609px;top:102px" width="57" height="17" shape-rendering="crispEdges"><rect width="57" height="17" fill="url(#dth)"/></svg>
<div style="left:609px;top:102px;width:57px;height:1px;background:#ffffff;"></div>
<div style="left:609px;top:102px;width:1px;height:16px;background:#ffffff;"></div>
<div style="left:609px;top:117px;width:57px;height:1px;background:#808080;"></div>
<div style="left:664px;top:103px;width:1px;height:15px;background:#808080;"></div>
<div style="left:609px;top:118px;width:57px;height:1px;background:#404040;"></div>
<div style="left:665px;top:102px;width:1px;height:17px;background:#404040;"></div>
<svg class="ic" style="left:267px;top:119px" width="16" height="16"><use href="#i-folder"/></svg>
<svg class="ic" style="left:267px;top:136px" width="16" height="16"><use href="#i-folder"/></svg>
<svg class="ic" style="left:267px;top:153px" width="16" height="16"><use href="#i-folder"/></svg>
<svg class="ic" style="left:267px;top:170px" width="16" height="16"><use href="#i-file"/></svg>
<svg class="ic" style="left:267px;top:187px" width="16" height="16"><use href="#i-file"/></svg>
<svg class="ic" style="left:267px;top:204px" width="16" height="16"><use href="#i-file"/></svg>
<svg class="ic" style="left:267px;top:221px" width="16" height="16"><use href="#i-file"/></svg>
<svg class="ic" style="left:267px;top:238px" width="16" height="16"><use href="#i-file"/></svg>
<svg class="ic" style="left:267px;top:255px" width="16" height="16"><use href="#i-file"/></svg>
<svg class="ic" style="left:267px;top:272px" width="16" height="16"><use href="#i-file"/></svg>
<svg class="ic" style="left:267px;top:289px" width="16" height="16"><use href="#i-file"/></svg>
<svg class="ic" style="left:267px;top:306px" width="16" height="16"><use href="#i-file"/></svg>
<svg class="ic" style="left:267px;top:323px" width="16" height="16"><use href="#i-file"/></svg>
<svg class="ic" style="left:267px;top:340px" width="16" height="16"><use href="#i-file"/></svg>
<svg class="ic" style="left:267px;top:357px" width="16" height="16"><use href="#i-file"/></svg>
<svg class="ic" style="left:267px;top:374px" width="16" height="16"><use href="#i-file"/></svg>
<svg class="ic" style="left:267px;top:391px" width="16" height="16"><use href="#i-file"/></svg>
<svg class="ic" style="left:267px;top:408px" width="16" height="16"><use href="#i-file"/></svg>
<svg class="ic" style="left:267px;top:425px" width="16" height="16"><use href="#i-file"/></svg>
<svg class="ic" style="left:267px;top:442px" width="16" height="16"><use href="#i-file"/></svg>
<svg class="ic" style="left:267px;top:459px" width="16" height="16"><use href="#i-file"/></svg>
<svg class="ic" style="left:267px;top:476px" width="16" height="16"><use href="#i-file"/></svg>
<svg class="ic" style="left:267px;top:493px" width="16" height="16"><use href="#i-file"/></svg>
<svg class="ic" style="left:267px;top:510px" width="16" height="16"><use href="#i-file"/></svg>
<svg class="ic" style="left:267px;top:527px" width="16" height="16"><use href="#i-file"/></svg>
<svg class="ic" style="left:267px;top:544px" width="16" height="16"><use href="#i-file"/></svg>
<svg class="ic" style="left:267px;top:561px" width="16" height="16"><use href="#i-file"/></svg>
<svg class="ic" style="left:267px;top:578px" width="16" height="16"><use href="#i-file"/></svg>
<svg class="ic" style="left:267px;top:595px" width="16" height="16"><use href="#i-file"/></svg>
<svg class="ic" style="left:267px;top:612px" width="16" height="16"><use href="#i-file"/></svg>
<svg class="ic" style="left:267px;top:629px" width="16" height="16"><use href="#i-file"/></svg>
<svg class="ic" style="left:267px;top:646px" width="16" height="16"><use href="#i-file"/></svg>
<svg class="ic" style="left:267px;top:663px" width="16" height="16"><use href="#i-file"/></svg>
<svg class="ic" style="left:267px;top:680px" width="16" height="16"><use href="#i-file"/></svg>
<svg class="ic" style="left:267px;top:697px" width="16" height="16"><use href="#i-file"/></svg>
<svg class="ic" style="left:267px;top:714px" width="16" height="16"><use href="#i-file"/></svg>
<svg class="ic" style="left:267px;top:731px" width="16" height="16"><use href="#i-file"/></svg>
<svg class="ic" style="left:267px;top:748px" width="16" height="16"><use href="#i-file"/></svg>
<svg class="ic" style="left:267px;top:765px" width="16" height="16"><use href="#i-file"/></svg>
<svg class="ic" style="left:267px;top:782px" width="16" height="16"><use href="#i-file"/></svg>
<svg class="ic" style="left:267px;top:799px" width="16" height="16"><use href="#i-file"/></svg>
<svg class="ic" style="left:267px;top:816px" width="16" height="16"><use href="#i-file"/></svg>
<svg class="ic" style="left:267px;top:833px" width="16" height="16"><use href="#i-file"/></svg>
<svg class="ic" style="left:267px;top:850px" width="16" height="16"><use href="#i-file"/></svg>
<svg class="ic" style="left:267px;top:867px" width="16" height="16"><use href="#i-file"/></svg>
<svg class="ic" style="left:267px;top:884px" width="16" height="16"><use href="#i-file"/></svg>
<svg class="ic" style="left:267px;top:901px" width="16" height="16"><use href="#i-file"/></svg>
<svg class="ic" style="left:267px;top:918px" width="16" height="16"><use href="#i-file"/></svg>
<svg class="ic" style="left:267px;top:935px" width="16" height="16"><use href="#i-file"/></svg>
<svg class="ic" style="left:267px;top:952px" width="16" height="16"><use href="#i-file"/></svg>
<svg class="ic" style="left:267px;top:969px" width="16" height="16"><use href="#i-file"/></svg>
<div style="left:666px;top:102px;width:16px;height:877px;background:#fff;background-image:conic-gradient(#fff 25%,#d4d1ca 0 50%,#fff 0 75%,#d4d1ca 0);background-size:2px 2px;"></div>
<div style="left:666px;top:102px;width:16px;height:16px;background:#d4d1ca;"></div>
<svg class="ic" style="left:666px;top:102px" width="16" height="16" shape-rendering="crispEdges"><rect width="16" height="16" fill="url(#dth)"/></svg>
<div style="left:667px;top:103px;width:14px;height:1px;background:#ffffff;"></div>
<div style="left:667px;top:103px;width:1px;height:14px;background:#ffffff;"></div>
<div style="left:666px;top:117px;width:16px;height:1px;background:#404040;"></div>
<div style="left:681px;top:102px;width:1px;height:16px;background:#404040;"></div>
<div style="left:667px;top:116px;width:14px;height:1px;background:#808080;"></div>
<div style="left:680px;top:103px;width:1px;height:14px;background:#808080;"></div>
<div style="left:673px;top:108px;width:1px;height:1px;background:#000;"></div>
<div style="left:672px;top:109px;width:3px;height:1px;background:#000;"></div>
<div style="left:671px;top:110px;width:5px;height:1px;background:#000;"></div>
<div style="left:670px;top:111px;width:7px;height:1px;background:#000;"></div>
<div style="left:666px;top:963px;width:16px;height:16px;background:#d4d1ca;"></div>
<svg class="ic" style="left:666px;top:963px" width="16" height="16" shape-rendering="crispEdges"><rect width="16" height="16" fill="url(#dth)"/></svg>
<div style="left:667px;top:964px;width:14px;height:1px;background:#ffffff;"></div>
<div style="left:667px;top:964px;width:1px;height:14px;background:#ffffff;"></div>
<div style="left:666px;top:978px;width:16px;height:1px;background:#404040;"></div>
<div style="left:681px;top:963px;width:1px;height:16px;background:#404040;"></div>
<div style="left:667px;top:977px;width:14px;height:1px;background:#808080;"></div>
<div style="left:680px;top:964px;width:1px;height:14px;background:#808080;"></div>
<div style="left:670px;top:969px;width:7px;height:1px;background:#000;"></div>
<div style="left:671px;top:970px;width:5px;height:1px;background:#000;"></div>
<div style="left:672px;top:971px;width:3px;height:1px;background:#000;"></div>
<div style="left:673px;top:972px;width:1px;height:1px;background:#000;"></div>
<div style="left:666px;top:118px;width:16px;height:426px;background:#d4d1ca;"></div>
<svg class="ic" style="left:666px;top:118px" width="16" height="426" shape-rendering="crispEdges"><rect width="16" height="426" fill="url(#dth)"/></svg>
<div style="left:667px;top:119px;width:14px;height:1px;background:#ffffff;"></div>
<div style="left:667px;top:119px;width:1px;height:424px;background:#ffffff;"></div>
<div style="left:666px;top:543px;width:16px;height:1px;background:#404040;"></div>
<div style="left:681px;top:118px;width:1px;height:426px;background:#404040;"></div>
<div style="left:667px;top:542px;width:14px;height:1px;background:#808080;"></div>
<div style="left:680px;top:119px;width:1px;height:424px;background:#808080;"></div>
<div style="left:259px;top:979px;width:407px;height:16px;background:#fff;background-image:conic-gradient(#fff 25%,#d4d1ca 0 50%,#fff 0 75%,#d4d1ca 0);background-size:2px 2px;"></div>
<div style="left:259px;top:979px;width:16px;height:16px;background:#d4d1ca;"></div>
<svg class="ic" style="left:259px;top:979px" width="16" height="16" shape-rendering="crispEdges"><rect width="16" height="16" fill="url(#dth)"/></svg>
<div style="left:260px;top:980px;width:14px;height:1px;background:#ffffff;"></div>
<div style="left:260px;top:980px;width:1px;height:14px;background:#ffffff;"></div>
<div style="left:259px;top:994px;width:16px;height:1px;background:#404040;"></div>
<div style="left:274px;top:979px;width:1px;height:16px;background:#404040;"></div>
<div style="left:260px;top:993px;width:14px;height:1px;background:#808080;"></div>
<div style="left:273px;top:980px;width:1px;height:14px;background:#808080;"></div>
<div style="left:267px;top:983px;width:1px;height:7px;background:#000;"></div>
<div style="left:266px;top:984px;width:1px;height:5px;background:#000;"></div>
<div style="left:265px;top:985px;width:1px;height:3px;background:#000;"></div>
<div style="left:264px;top:986px;width:1px;height:1px;background:#000;"></div>
<div style="left:650px;top:979px;width:16px;height:16px;background:#d4d1ca;"></div>
<svg class="ic" style="left:650px;top:979px" width="16" height="16" shape-rendering="crispEdges"><rect width="16" height="16" fill="url(#dth)"/></svg>
<div style="left:651px;top:980px;width:14px;height:1px;background:#ffffff;"></div>
<div style="left:651px;top:980px;width:1px;height:14px;background:#ffffff;"></div>
<div style="left:650px;top:994px;width:16px;height:1px;background:#404040;"></div>
<div style="left:665px;top:979px;width:1px;height:16px;background:#404040;"></div>
<div style="left:651px;top:993px;width:14px;height:1px;background:#808080;"></div>
<div style="left:664px;top:980px;width:1px;height:14px;background:#808080;"></div>
<div style="left:656px;top:983px;width:1px;height:7px;background:#000;"></div>
<div style="left:657px;top:984px;width:1px;height:5px;background:#000;"></div>
<div style="left:658px;top:985px;width:1px;height:3px;background:#000;"></div>
<div style="left:659px;top:986px;width:1px;height:1px;background:#000;"></div>
<div style="left:275px;top:979px;width:307px;height:16px;background:#d4d1ca;"></div>
<svg class="ic" style="left:275px;top:979px" width="307" height="16" shape-rendering="crispEdges"><rect width="307" height="16" fill="url(#dth)"/></svg>
<div style="left:276px;top:980px;width:305px;height:1px;background:#ffffff;"></div>
<div style="left:276px;top:980px;width:1px;height:14px;background:#ffffff;"></div>
<div style="left:275px;top:994px;width:307px;height:1px;background:#404040;"></div>
<div style="left:581px;top:979px;width:1px;height:16px;background:#404040;"></div>
<div style="left:276px;top:993px;width:305px;height:1px;background:#808080;"></div>
<div style="left:580px;top:980px;width:1px;height:14px;background:#808080;"></div>
<div style="left:666px;top:979px;width:16px;height:16px;background:#d4d1ca;"></div>
<svg class="ic" style="left:666px;top:979px" width="16" height="16" shape-rendering="crispEdges"><rect width="16" height="16" fill="url(#dth)"/></svg>
<svg class="ic" style="left:668px;top:981px" width="13" height="13" shape-rendering="crispEdges"><path d="M12 1L1 12M12 5L5 12M12 9L9 12" stroke="#808080" stroke-width="1.4" fill="none"/><path d="M12 0L0 12M12 4L4 12M12 8L8 12" stroke="#fff" stroke-width="1" fill="none"/></svg>
<div style="left:254px;top:102px;width:5px;height:893px;background:#d4d1ca;"></div>
<div style="left:688px;top:0px;width:593px;height:996px;background:#d4d1ca;"></div>
<svg class="ic" style="left:688px;top:0px" width="593" height="996" shape-rendering="crispEdges"><rect width="593" height="996" fill="url(#dth)"/></svg>
<div style="left:689px;top:0px;width:1px;height:996px;background:#ffffff;"></div>
<div style="left:1279px;top:0px;width:1px;height:996px;background:#808080;"></div>
<div style="left:1280px;top:0px;width:1px;height:996px;background:#404040;"></div>
<div style="left:692px;top:2px;width:585px;height:18px;background:#808080;"></div>
<svg class="ic" style="left:694px;top:3px" width="16" height="16"><use href="#i-zipfolder"/></svg>
<div style="left:1225px;top:4px;width:16px;height:14px;background:#d4d1ca;"></div>
<svg class="ic" style="left:1225px;top:4px" width="16" height="14" shape-rendering="crispEdges"><rect width="16" height="14" fill="url(#dth)"/></svg>
<div style="left:1225px;top:4px;width:15px;height:1px;background:#ffffff;"></div>
<div style="left:1225px;top:4px;width:1px;height:13px;background:#ffffff;"></div>
<div style="left:1225px;top:17px;width:16px;height:1px;background:#404040;"></div>
<div style="left:1240px;top:4px;width:1px;height:14px;background:#404040;"></div>
<div style="left:1226px;top:16px;width:14px;height:1px;background:#808080;"></div>
<div style="left:1239px;top:5px;width:1px;height:12px;background:#808080;"></div>
<div style="left:1241px;top:4px;width:16px;height:14px;background:#d4d1ca;"></div>
<svg class="ic" style="left:1241px;top:4px" width="16" height="14" shape-rendering="crispEdges"><rect width="16" height="14" fill="url(#dth)"/></svg>
<div style="left:1241px;top:4px;width:15px;height:1px;background:#ffffff;"></div>
<div style="left:1241px;top:4px;width:1px;height:13px;background:#ffffff;"></div>
<div style="left:1241px;top:17px;width:16px;height:1px;background:#404040;"></div>
<div style="left:1256px;top:4px;width:1px;height:14px;background:#404040;"></div>
<div style="left:1242px;top:16px;width:14px;height:1px;background:#808080;"></div>
<div style="left:1255px;top:5px;width:1px;height:12px;background:#808080;"></div>
<div style="left:1259px;top:4px;width:16px;height:14px;background:#d4d1ca;"></div>
<svg class="ic" style="left:1259px;top:4px" width="16" height="14" shape-rendering="crispEdges"><rect width="16" height="14" fill="url(#dth)"/></svg>
<div style="left:1259px;top:4px;width:15px;height:1px;background:#ffffff;"></div>
<div style="left:1259px;top:4px;width:1px;height:13px;background:#ffffff;"></div>
<div style="left:1259px;top:17px;width:16px;height:1px;background:#404040;"></div>
<div style="left:1274px;top:4px;width:1px;height:14px;background:#404040;"></div>
<div style="left:1260px;top:16px;width:14px;height:1px;background:#808080;"></div>
<div style="left:1273px;top:5px;width:1px;height:12px;background:#808080;"></div>
<div style="left:1229px;top:13px;width:6px;height:2px;background:#000;"></div>
<div style="left:1244px;top:6px;width:9px;height:2px;background:#000;"></div>
<div style="left:1244px;top:6px;width:1px;height:9px;background:#000;"></div>
<div style="left:1252px;top:6px;width:1px;height:9px;background:#000;"></div>
<div style="left:1244px;top:14px;width:9px;height:1px;background:#000;"></div>
<svg class="ic" style="left:1263px;top:7px" width="8" height="7" shape-rendering="crispEdges"><path d="M0 0h2v1h1v1h2v-1h1v-1h2v1h-1v1h-1v1h-1v1h1v1h1v1h1v1h-2v-1h-1v-1h-2v1h-1v1h-2v-1h1v-1h1v-1h1v-1h-1v-1h-1v-1h-1z" fill="#000"/></svg>
<div style="left:692px;top:21px;width:585px;height:36px;background:#d4d1ca;"></div>
<svg class="ic" style="left:692px;top:21px" width="585" height="36" shape-rendering="crispEdges"><rect width="585" height="36" fill="url(#dth)"/></svg>
<div style="left:692px;top:21px;width:585px;height:1px;background:#808080;"></div>
<div style="left:693px;top:22px;width:583px;height:1px;background:#ffffff;"></div>
<div style="left:692px;top:55px;width:584px;height:1px;background:#808080;"></div>
<div style="left:692px;top:56px;width:585px;height:1px;background:#ffffff;"></div>
<div style="left:692px;top:21px;width:1px;height:35px;background:#808080;"></div>
<div style="left:693px;top:22px;width:1px;height:33px;background:#ffffff;"></div>
<div style="left:1275px;top:22px;width:1px;height:34px;background:#808080;"></div>
<div style="left:1276px;top:21px;width:1px;height:36px;background:#ffffff;"></div>
<svg class="ic" style="left:689px;top:24px" width="68" height="30"><use href="#i-nav"/></svg>
<div style="left:768px;top:28px;width:264px;height:1px;background:#808080;"></div>
<div style="left:768px;top:28px;width:1px;height:22px;background:#808080;"></div>
<div style="left:769px;top:49px;width:263px;height:1px;background:#ffffff;"></div>
<div style="left:1031px;top:29px;width:1px;height:21px;background:#ffffff;"></div>
<svg class="ic" style="left:769px;top:29px" width="16" height="16"><use href="#i-folder"/></svg>
<div style="left:793px;top:37px;width:5px;height:1px;background:#000;"></div>
<div style="left:794px;top:38px;width:3px;height:1px;background:#000;"></div>
<div style="left:795px;top:39px;width:1px;height:1px;background:#000;"></div>
<div style="left:878px;top:37px;width:5px;height:1px;background:#000;"></div>
<div style="left:879px;top:38px;width:3px;height:1px;background:#000;"></div>
<div style="left:880px;top:39px;width:1px;height:1px;background:#000;"></div>
<div style="left:917px;top:37px;width:5px;height:1px;background:#000;"></div>
<div style="left:918px;top:38px;width:3px;height:1px;background:#000;"></div>
<div style="left:919px;top:39px;width:1px;height:1px;background:#000;"></div>
<div style="left:991px;top:37px;width:7px;height:1px;background:#000;"></div>
<div style="left:992px;top:38px;width:5px;height:1px;background:#000;"></div>
<div style="left:993px;top:39px;width:3px;height:1px;background:#000;"></div>
<div style="left:994px;top:40px;width:1px;height:1px;background:#000;"></div>
<svg class="ic" style="left:1009px;top:30px" width="21" height="19"><use href="#i-refresh"/></svg>
<div style="left:1035px;top:28px;width:211px;height:22px;background:#fafbf8;"></div>
<div style="left:1035px;top:28px;width:210px;height:1px;background:#808080;"></div>
<div style="left:1035px;top:28px;width:1px;height:21px;background:#808080;"></div>
<div style="left:1036px;top:29px;width:208px;height:1px;background:#404040;"></div>
<div style="left:1036px;top:29px;width:1px;height:19px;background:#404040;"></div>
<div style="left:1035px;top:49px;width:211px;height:1px;background:#ffffff;"></div>
<div style="left:1245px;top:28px;width:1px;height:22px;background:#ffffff;"></div>
<div style="left:1036px;top:48px;width:209px;height:1px;background:#d4d1ca;"></div>
<div style="left:1244px;top:29px;width:1px;height:20px;background:#d4d1ca;"></div>
<svg class="ic" style="left:1251px;top:29px" width="20" height="20"><use href="#i-search"/></svg>
<svg class="ic" style="left:701px;top:83px" width="16" height="16"><use href="#i-organize"/></svg>
<div style="left:772px;top:89px;width:7px;height:1px;background:#000;"></div>
<div style="left:773px;top:90px;width:5px;height:1px;background:#000;"></div>
<div style="left:774px;top:91px;width:3px;height:1px;background:#000;"></div>
<div style="left:775px;top:92px;width:1px;height:1px;background:#000;"></div>
<svg class="ic" style="left:797px;top:84px" width="16" height="16"><use href="#i-views"/></svg>
<div style="left:857px;top:89px;width:7px;height:1px;background:#000;"></div>
<div style="left:858px;top:90px;width:5px;height:1px;background:#000;"></div>
<div style="left:859px;top:91px;width:3px;height:1px;background:#000;"></div>
<div style="left:860px;top:92px;width:1px;height:1px;background:#000;"></div>
<svg class="ic" style="left:879px;top:82px" width="16" height="16"><use href="#i-pl"/></svg>
<div style="left:938px;top:89px;width:7px;height:1px;background:#000;"></div>
<div style="left:939px;top:90px;width:5px;height:1px;background:#000;"></div>
<div style="left:940px;top:91px;width:3px;height:1px;background:#000;"></div>
<div style="left:941px;top:92px;width:1px;height:1px;background:#000;"></div>
<svg class="ic" style="left:1251px;top:82px" width="18" height="18"><use href="#i-help"/></svg>
<div style="left:688px;top:995px;width:592px;height:1px;background:#606060;"></div>
<div style="left:692px;top:107px;width:226px;height:1px;background:#ffffff;"></div>
<div style="left:692px;top:110px;width:226px;height:883px;background:#fafbf8;"></div>
<svg class="ic" style="left:903px;top:116px" width="10" height="7"><path d="M1 1.500l4 4l4-4" fill="none" stroke="#00138c" stroke-width="2"/></svg>
<svg class="ic" style="left:702px;top:134px" width="16" height="16"><use href="#i-desktop"/></svg>
<svg class="ic" style="left:712px;top:152px" width="16" height="16"><use href="#i-user"/></svg>
<svg class="ic" style="left:712px;top:170px" width="16" height="16"><use href="#i-folder"/></svg>
<svg class="ic" style="left:712px;top:188px" width="16" height="16"><use href="#i-computer"/></svg>
<svg class="ic" style="left:722px;top:206px" width="16" height="16"><use href="#i-floppy"/></svg>
<svg class="ic" style="left:722px;top:224px" width="16" height="16"><use href="#i-disk"/></svg>
<svg class="ic" style="left:732px;top:242px" width="16" height="16"><use href="#i-folder"/></svg>
<div style="left:751px;top:241px;width:27px;height:18px;background:#d4d1ca;"></div>
<svg class="ic" style="left:751px;top:241px" width="27" height="18" shape-rendering="crispEdges"><rect width="27" height="18" fill="url(#dth)"/></svg>
<svg class="ic" style="left:742px;top:260px" width="16" height="16"><use href="#i-folder"/></svg>
<svg class="ic" style="left:742px;top:278px" width="16" height="16"><use href="#i-folder"/></svg>
<svg class="ic" style="left:742px;top:296px" width="16" height="16"><use href="#i-folder"/></svg>
<svg class="ic" style="left:742px;top:314px" width="16" height="16"><use href="#i-folder"/></svg>
<svg class="ic" style="left:742px;top:332px" width="16" height="16"><use href="#i-folder"/></svg>
<svg class="ic" style="left:742px;top:350px" width="16" height="16"><use href="#i-folder"/></svg>
<svg class="ic" style="left:742px;top:368px" width="16" height="16"><use href="#i-folder"/></svg>
<svg class="ic" style="left:742px;top:386px" width="16" height="16"><use href="#i-folder"/></svg>
<svg class="ic" style="left:742px;top:404px" width="16" height="16"><use href="#i-folder"/></svg>
<svg class="ic" style="left:742px;top:422px" width="16" height="16"><use href="#i-folder"/></svg>
<svg class="ic" style="left:742px;top:440px" width="16" height="16"><use href="#i-folder"/></svg>
<svg class="ic" style="left:742px;top:458px" width="16" height="16"><use href="#i-folder"/></svg>
<svg class="ic" style="left:742px;top:476px" width="16" height="16"><use href="#i-folder"/></svg>
<svg class="ic" style="left:742px;top:494px" width="16" height="16"><use href="#i-folder"/></svg>
<svg class="ic" style="left:742px;top:512px" width="16" height="16"><use href="#i-folder"/></svg>
<svg class="ic" style="left:742px;top:530px" width="16" height="16"><use href="#i-folder"/></svg>
<svg class="ic" style="left:732px;top:548px" width="16" height="16"><use href="#i-folder"/></svg>
<svg class="ic" style="left:732px;top:566px" width="16" height="16"><use href="#i-folder"/></svg>
<svg class="ic" style="left:732px;top:584px" width="16" height="16"><use href="#i-folder"/></svg>
<svg class="ic" style="left:732px;top:602px" width="16" height="16"><use href="#i-folder"/></svg>
<svg class="ic" style="left:732px;top:620px" width="16" height="16"><use href="#i-folder"/></svg>
<svg class="ic" style="left:722px;top:638px" width="16" height="16"><use href="#i-cd"/></svg>
<svg class="ic" style="left:712px;top:656px" width="16" height="16"><use href="#i-network"/></svg>
<svg class="ic" style="left:712px;top:674px" width="16" height="16"><use href="#i-cpanel"/></svg>
<svg class="ic" style="left:712px;top:692px" width="16" height="16"><use href="#i-recycle"/></svg>
<div style="left:923px;top:124px;width:354px;height:853px;background:#fafbf8;"></div>
<div style="left:923px;top:124px;width:140px;height:853px;background:#fafaf8;"></div>
<svg class="ic" style="left:923px;top:124px" width="140" height="853" shape-rendering="crispEdges"><rect width="140" height="853" fill="url(#dtn)"/></svg>
<div style="left:923px;top:107px;width:127px;height:17px;background:#d4d1ca;"></div>
<svg class="ic" style="left:923px;top:107px" width="127" height="17" shape-rendering="crispEdges"><rect width="127" height="17" fill="url(#dth)"/></svg>
<div style="left:923px;top:107px;width:127px;height:1px;background:#ffffff;"></div>
<div style="left:923px;top:107px;width:1px;height:16px;background:#ffffff;"></div>
<div style="left:923px;top:122px;width:127px;height:1px;background:#808080;"></div>
<div style="left:1048px;top:108px;width:1px;height:15px;background:#808080;"></div>
<div style="left:923px;top:123px;width:127px;height:1px;background:#404040;"></div>
<div style="left:1049px;top:107px;width:1px;height:17px;background:#404040;"></div>
<div style="left:968px;top:113px;width:1px;height:1px;background:#a4a09c;"></div>
<div style="left:967px;top:114px;width:3px;height:1px;background:#a4a09c;"></div>
<div style="left:966px;top:115px;width:5px;height:1px;background:#a4a09c;"></div>
<div style="left:965px;top:116px;width:7px;height:1px;background:#a4a09c;"></div>
<div style="left:964px;top:117px;width:9px;height:1px;background:#a4a09c;"></div>
<div style="left:1050px;top:107px;width:13px;height:17px;background:#d4d1ca;"></div>
<svg class="ic" style="left:1050px;top:107px" width="13" height="17" shape-rendering="crispEdges"><rect width="13" height="17" fill="url(#dth)"/></svg>
<div style="left:1050px;top:107px;width:13px;height:1px;background:#ffffff;"></div>
<div style="left:1050px;top:107px;width:1px;height:16px;background:#ffffff;"></div>
<div style="left:1050px;top:122px;width:13px;height:1px;background:#808080;"></div>
<div style="left:1061px;top:108px;width:1px;height:15px;background:#808080;"></div>
<div style="left:1050px;top:123px;width:13px;height:1px;background:#404040;"></div>
<div style="left:1062px;top:107px;width:1px;height:17px;background:#404040;"></div>
<div style="left:1054px;top:115px;width:5px;height:1px;background:#000;"></div>
<div style="left:1055px;top:116px;width:3px;height:1px;background:#000;"></div>
<div style="left:1056px;top:117px;width:1px;height:1px;background:#000;"></div>
<div style="left:1063px;top:107px;width:92px;height:17px;background:#d4d1ca;"></div>
<svg class="ic" style="left:1063px;top:107px" width="92" height="17" shape-rendering="crispEdges"><rect width="92" height="17" fill="url(#dth)"/></svg>
<div style="left:1063px;top:107px;width:92px;height:1px;background:#ffffff;"></div>
<div style="left:1063px;top:107px;width:1px;height:16px;background:#ffffff;"></div>
<div style="left:1063px;top:122px;width:92px;height:1px;background:#808080;"></div>
<div style="left:1153px;top:108px;width:1px;height:15px;background:#808080;"></div>
<div style="left:1063px;top:123px;width:92px;height:1px;background:#404040;"></div>
<div style="left:1154px;top:107px;width:1px;height:17px;background:#404040;"></div>
<div style="left:1155px;top:107px;width:13px;height:17px;background:#d4d1ca;"></div>
<svg class="ic" style="left:1155px;top:107px" width="13" height="17" shape-rendering="crispEdges"><rect width="13" height="17" fill="url(#dth)"/></svg>
<div style="left:1155px;top:107px;width:13px;height:1px;background:#ffffff;"></div>
<div style="left:1155px;top:107px;width:1px;height:16px;background:#ffffff;"></div>
<div style="left:1155px;top:122px;width:13px;height:1px;background:#808080;"></div>
<div style="left:1166px;top:108px;width:1px;height:15px;background:#808080;"></div>
<div style="left:1155px;top:123px;width:13px;height:1px;background:#404040;"></div>
<div style="left:1167px;top:107px;width:1px;height:17px;background:#404040;"></div>
<div style="left:1159px;top:115px;width:5px;height:1px;background:#000;"></div>
<div style="left:1160px;top:116px;width:3px;height:1px;background:#000;"></div>
<div style="left:1161px;top:117px;width:1px;height:1px;background:#000;"></div>
<div style="left:1168px;top:107px;width:92px;height:17px;background:#d4d1ca;"></div>
<svg class="ic" style="left:1168px;top:107px" width="92" height="17" shape-rendering="crispEdges"><rect width="92" height="17" fill="url(#dth)"/></svg>
<div style="left:1168px;top:107px;width:92px;height:1px;background:#ffffff;"></div>
<div style="left:1168px;top:107px;width:1px;height:16px;background:#ffffff;"></div>
<div style="left:1168px;top:122px;width:92px;height:1px;background:#808080;"></div>
<div style="left:1258px;top:108px;width:1px;height:15px;background:#808080;"></div>
<div style="left:1168px;top:123px;width:92px;height:1px;background:#404040;"></div>
<div style="left:1259px;top:107px;width:1px;height:17px;background:#404040;"></div>
<div style="left:1260px;top:107px;width:13px;height:17px;background:#d4d1ca;"></div>
<svg class="ic" style="left:1260px;top:107px" width="13" height="17" shape-rendering="crispEdges"><rect width="13" height="17" fill="url(#dth)"/></svg>
<div style="left:1260px;top:107px;width:13px;height:1px;background:#ffffff;"></div>
<div style="left:1260px;top:107px;width:1px;height:16px;background:#ffffff;"></div>
<div style="left:1260px;top:122px;width:13px;height:1px;background:#808080;"></div>
<div style="left:1271px;top:108px;width:1px;height:15px;background:#808080;"></div>
<div style="left:1260px;top:123px;width:13px;height:1px;background:#404040;"></div>
<div style="left:1272px;top:107px;width:1px;height:17px;background:#404040;"></div>
<div style="left:1264px;top:115px;width:5px;height:1px;background:#000;"></div>
<div style="left:1265px;top:116px;width:3px;height:1px;background:#000;"></div>
<div style="left:1266px;top:117px;width:1px;height:1px;background:#000;"></div>
<div style="left:1273px;top:107px;width:4px;height:17px;background:#d4d1ca;"></div>
<div style="left:1273px;top:107px;width:4px;height:1px;background:#ffffff;"></div>
<div style="left:1273px;top:107px;width:1px;height:16px;background:#ffffff;"></div>
<div style="left:1273px;top:122px;width:4px;height:1px;background:#808080;"></div>
<div style="left:1273px;top:123px;width:4px;height:1px;background:#404040;"></div>
<svg class="ic" style="left:931px;top:124px" width="16" height="16"><use href="#i-folder"/></svg>
<svg class="ic" style="left:931px;top:141px" width="16" height="16"><use href="#i-folder"/></svg>
<svg class="ic" style="left:931px;top:158px" width="16" height="16"><use href="#i-folder"/></svg>
<svg class="ic" style="left:931px;top:175px" width="16" height="16"><use href="#i-folder"/></svg>
<svg class="ic" style="left:931px;top:192px" width="16" height="16"><use href="#i-folder"/></svg>
<svg class="ic" style="left:931px;top:209px" width="16" height="16"><use href="#i-folder"/></svg>
<svg class="ic" style="left:931px;top:226px" width="16" height="16"><use href="#i-folder"/></svg>
<svg class="ic" style="left:931px;top:243px" width="16" height="16"><use href="#i-folder"/></svg>
<svg class="ic" style="left:931px;top:260px" width="16" height="16"><use href="#i-folder"/></svg>
<svg class="ic" style="left:931px;top:277px" width="16" height="16"><use href="#i-folder"/></svg>
<svg class="ic" style="left:931px;top:294px" width="16" height="16"><use href="#i-folder"/></svg>
<svg class="ic" style="left:931px;top:311px" width="16" height="16"><use href="#i-folder"/></svg>
<svg class="ic" style="left:931px;top:328px" width="16" height="16"><use href="#i-folder"/></svg>
<svg class="ic" style="left:931px;top:345px" width="16" height="16"><use href="#i-folder"/></svg>
<svg class="ic" style="left:931px;top:362px" width="16" height="16"><use href="#i-folder"/></svg>
<svg class="ic" style="left:931px;top:379px" width="16" height="16"><use href="#i-folder"/></svg>
<svg class="ic" style="left:931px;top:396px" width="16" height="16"><use href="#i-file"/></svg>
<div style="left:947px;top:413px;width:330px;height:17px;background:#d4d1ca;"></div>
<svg class="ic" style="left:947px;top:413px" width="330" height="17" shape-rendering="crispEdges"><rect width="330" height="17" fill="url(#dth)"/></svg>
<svg class="ic" style="left:931px;top:413px" width="16" height="16"><use href="#i-pl"/></svg>
<svg class="ic" style="left:931px;top:430px" width="16" height="16"><use href="#i-file"/></svg>
<svg class="ic" style="left:931px;top:447px" width="16" height="16"><use href="#i-pl"/></svg>
<svg class="ic" style="left:931px;top:464px" width="16" height="16"><use href="#i-file"/></svg>
<svg class="ic" style="left:931px;top:481px" width="16" height="16"><use href="#i-pl"/></svg>
<svg class="ic" style="left:931px;top:498px" width="16" height="16"><use href="#i-txt"/></svg>
<svg class="ic" style="left:931px;top:515px" width="16" height="16"><use href="#i-txt"/></svg>
<div style="left:923px;top:977px;width:354px;height:16px;background:#fff;background-image:conic-gradient(#fff 25%,#d4d1ca 0 50%,#fff 0 75%,#d4d1ca 0);background-size:2px 2px;"></div>
<div style="left:923px;top:977px;width:16px;height:16px;background:#d4d1ca;"></div>
<svg class="ic" style="left:923px;top:977px" width="16" height="16" shape-rendering="crispEdges"><rect width="16" height="16" fill="url(#dth)"/></svg>
<div style="left:924px;top:978px;width:14px;height:1px;background:#ffffff;"></div>
<div style="left:924px;top:978px;width:1px;height:14px;background:#ffffff;"></div>
<div style="left:923px;top:992px;width:16px;height:1px;background:#404040;"></div>
<div style="left:938px;top:977px;width:1px;height:16px;background:#404040;"></div>
<div style="left:924px;top:991px;width:14px;height:1px;background:#808080;"></div>
<div style="left:937px;top:978px;width:1px;height:14px;background:#808080;"></div>
<div style="left:931px;top:981px;width:1px;height:7px;background:#000;"></div>
<div style="left:930px;top:982px;width:1px;height:5px;background:#000;"></div>
<div style="left:929px;top:983px;width:1px;height:3px;background:#000;"></div>
<div style="left:928px;top:984px;width:1px;height:1px;background:#000;"></div>
<div style="left:1261px;top:977px;width:16px;height:16px;background:#d4d1ca;"></div>
<svg class="ic" style="left:1261px;top:977px" width="16" height="16" shape-rendering="crispEdges"><rect width="16" height="16" fill="url(#dth)"/></svg>
<div style="left:1262px;top:978px;width:14px;height:1px;background:#ffffff;"></div>
<div style="left:1262px;top:978px;width:1px;height:14px;background:#ffffff;"></div>
<div style="left:1261px;top:992px;width:16px;height:1px;background:#404040;"></div>
<div style="left:1276px;top:977px;width:1px;height:16px;background:#404040;"></div>
<div style="left:1262px;top:991px;width:14px;height:1px;background:#808080;"></div>
<div style="left:1275px;top:978px;width:1px;height:14px;background:#808080;"></div>
<div style="left:1267px;top:981px;width:1px;height:7px;background:#000;"></div>
<div style="left:1268px;top:982px;width:1px;height:5px;background:#000;"></div>
<div style="left:1269px;top:983px;width:1px;height:3px;background:#000;"></div>
<div style="left:1270px;top:984px;width:1px;height:1px;background:#000;"></div>
<div style="left:939px;top:977px;width:271px;height:16px;background:#d4d1ca;"></div>
<svg class="ic" style="left:939px;top:977px" width="271" height="16" shape-rendering="crispEdges"><rect width="271" height="16" fill="url(#dth)"/></svg>
<div style="left:940px;top:978px;width:269px;height:1px;background:#ffffff;"></div>
<div style="left:940px;top:978px;width:1px;height:14px;background:#ffffff;"></div>
<div style="left:939px;top:992px;width:271px;height:1px;background:#404040;"></div>
<div style="left:1209px;top:977px;width:1px;height:16px;background:#404040;"></div>
<div style="left:940px;top:991px;width:269px;height:1px;background:#808080;"></div>
<div style="left:1208px;top:978px;width:1px;height:14px;background:#808080;"></div>
<div style="left:918px;top:107px;width:5px;height:886px;background:#d4d1ca;"></div>
<div style="left:0px;top:996px;width:1280px;height:28px;background:#d4d1ca;"></div>
<svg class="ic" style="left:0px;top:996px" width="1280" height="28" shape-rendering="crispEdges"><rect width="1280" height="28" fill="url(#dth)"/></svg>
<div style="left:0px;top:997px;width:1280px;height:1px;background:#ffffff;"></div>
<div style="left:2px;top:1000px;width:52px;height:22px;background:#d4d1ca;"></div>
<svg class="ic" style="left:2px;top:1000px" width="52" height="22" shape-rendering="crispEdges"><rect width="52" height="22" fill="url(#dth)"/></svg>
<div style="left:2px;top:1000px;width:51px;height:1px;background:#ffffff;"></div>
<div style="left:2px;top:1000px;width:1px;height:21px;background:#ffffff;"></div>
<div style="left:2px;top:1021px;width:52px;height:1px;background:#404040;"></div>
<div style="left:53px;top:1000px;width:1px;height:22px;background:#404040;"></div>
<div style="left:3px;top:1020px;width:50px;height:1px;background:#808080;"></div>
<div style="left:52px;top:1001px;width:1px;height:20px;background:#808080;"></div>
<svg class="ic" style="left:4px;top:1003px" width="16" height="16"><use href="#i-winflag"/></svg>
<div style="left:61px;top:1002px;width:3px;height:18px;background:#d4d1ca;"></div>
<div style="left:61px;top:1002px;width:1px;height:18px;background:#ffffff;"></div>
<div style="left:61px;top:1002px;width:3px;height:1px;background:#ffffff;"></div>
<div style="left:63px;top:1002px;width:1px;height:18px;background:#808080;"></div>
<div style="left:61px;top:1019px;width:3px;height:1px;background:#808080;"></div>
<svg class="ic" style="left:72px;top:1003px" width="16" height="16"><use href="#i-server"/></svg>
<svg class="ic" style="left:94px;top:1003px" width="16" height="16"><use href="#i-desktop"/></svg>
<svg class="ic" style="left:117px;top:1003px" width="16" height="16"><use href="#i-firefox"/></svg>
<div style="left:166px;top:1002px;width:3px;height:18px;background:#d4d1ca;"></div>
<div style="left:166px;top:1002px;width:1px;height:18px;background:#ffffff;"></div>
<div style="left:166px;top:1002px;width:3px;height:1px;background:#ffffff;"></div>
<div style="left:168px;top:1002px;width:1px;height:18px;background:#808080;"></div>
<div style="left:166px;top:1019px;width:3px;height:1px;background:#808080;"></div>
<div style="left:173px;top:1000px;width:160px;height:22px;background:#d4d1ca;"></div>
<svg class="ic" style="left:173px;top:1000px" width="160" height="22" shape-rendering="crispEdges"><rect width="160" height="22" fill="url(#dth)"/></svg>
<div style="left:173px;top:1000px;width:159px;height:1px;background:#ffffff;"></div>
<div style="left:173px;top:1000px;width:1px;height:21px;background:#ffffff;"></div>
<div style="left:173px;top:1021px;width:160px;height:1px;background:#404040;"></div>
<div style="left:332px;top:1000px;width:1px;height:22px;background:#404040;"></div>
<div style="left:174px;top:1020px;width:158px;height:1px;background:#808080;"></div>
<div style="left:331px;top:1001px;width:1px;height:20px;background:#808080;"></div>
<svg class="ic" style="left:177px;top:1003px" width="16" height="16"><use href="#i-firefox"/></svg>
<div style="left:336px;top:1000px;width:160px;height:22px;background:#d4d1ca;"></div>
<svg class="ic" style="left:336px;top:1000px" width="160" height="22" shape-rendering="crispEdges"><rect width="160" height="22" fill="url(#dth)"/></svg>
<div style="left:336px;top:1000px;width:159px;height:1px;background:#ffffff;"></div>
<div style="left:336px;top:1000px;width:1px;height:21px;background:#ffffff;"></div>
<div style="left:336px;top:1021px;width:160px;height:1px;background:#404040;"></div>
<div style="left:495px;top:1000px;width:1px;height:22px;background:#404040;"></div>
<div style="left:337px;top:1020px;width:158px;height:1px;background:#808080;"></div>
<div style="left:494px;top:1001px;width:1px;height:20px;background:#808080;"></div>
<svg class="ic" style="left:340px;top:1003px" width="16" height="16"><use href="#i-zipfolder"/></svg>
<div style="left:499px;top:1000px;width:160px;height:22px;background:#d4d1ca;"></div>
<svg class="ic" style="left:499px;top:1000px" width="160" height="22" shape-rendering="crispEdges"><rect width="160" height="22" fill="url(#dth)"/></svg>
<div style="left:499px;top:1000px;width:159px;height:1px;background:#ffffff;"></div>
<div style="left:499px;top:1000px;width:1px;height:21px;background:#ffffff;"></div>
<div style="left:499px;top:1021px;width:160px;height:1px;background:#404040;"></div>
<div style="left:658px;top:1000px;width:1px;height:22px;background:#404040;"></div>
<div style="left:500px;top:1020px;width:158px;height:1px;background:#808080;"></div>
<div style="left:657px;top:1001px;width:1px;height:20px;background:#808080;"></div>
<svg class="ic" style="left:503px;top:1003px" width="16" height="16"><use href="#i-zipfolder"/></svg>
<div style="left:662px;top:1000px;width:160px;height:22px;background:#fff;background-image:conic-gradient(#fff 25%,#d4d1ca 0 50%,#fff 0 75%,#d4d1ca 0);background-size:2px 2px;"></div>
<div style="left:662px;top:1000px;width:160px;height:1px;background:#404040;"></div>
<div style="left:662px;top:1000px;width:1px;height:22px;background:#404040;"></div>
<div style="left:663px;top:1001px;width:158px;height:1px;background:#808080;"></div>
<div style="left:663px;top:1001px;width:1px;height:20px;background:#808080;"></div>
<div style="left:662px;top:1021px;width:160px;height:1px;background:#ffffff;"></div>
<div style="left:821px;top:1000px;width:1px;height:22px;background:#ffffff;"></div>
<svg class="ic" style="left:667px;top:1004px" width="16" height="16"><use href="#i-zipfolder"/></svg>
<div style="left:825px;top:1000px;width:160px;height:22px;background:#d4d1ca;"></div>
<svg class="ic" style="left:825px;top:1000px" width="160" height="22" shape-rendering="crispEdges"><rect width="160" height="22" fill="url(#dth)"/></svg>
<div style="left:825px;top:1000px;width:159px;height:1px;background:#ffffff;"></div>
<div style="left:825px;top:1000px;width:1px;height:21px;background:#ffffff;"></div>
<div style="left:825px;top:1021px;width:160px;height:1px;background:#404040;"></div>
<div style="left:984px;top:1000px;width:1px;height:22px;background:#404040;"></div>
<div style="left:826px;top:1020px;width:158px;height:1px;background:#808080;"></div>
<div style="left:983px;top:1001px;width:1px;height:20px;background:#808080;"></div>
<svg class="ic" style="left:829px;top:1003px" width="16" height="16"><use href="#i-notepad"/></svg>
<div style="left:1134px;top:1000px;width:143px;height:1px;background:#808080;"></div>
<div style="left:1134px;top:1000px;width:1px;height:22px;background:#808080;"></div>
<div style="left:1134px;top:1021px;width:143px;height:1px;background:#ffffff;"></div>
<div style="left:1276px;top:1000px;width:1px;height:22px;background:#ffffff;"></div>
<svg class="ic" style="left:1137px;top:1003px" width="16" height="16"><use href="#i-vm"/></svg>
<svg class="ic" style="left:1155px;top:1003px" width="16" height="16"><use href="#i-usb"/></svg>
<svg class="ic" style="left:1183px;top:1003px" width="16" height="16"><use href="#i-net2"/></svg>
<svg class="ic" style="left:1201px;top:1003px" width="16" height="16"><use href="#i-vol"/></svg></div>
<div class="L T" id="tx">
<span class="bold" style="left:25px;top:0px;color:#fff">assp.mod</span>
<span style="left:116px;top:27px;letter-spacing:-.15px">Downloads</span>
<span style="left:185px;top:27px;">assp.mod</span>
<span style="left:248px;top:27px;">assp.mod</span>
<span style="left:444px;top:29px;color:#808080">Search</span>
<span style="left:12px;top:56px;">File</span>
<span style="left:44px;top:56px;">Edit</span>
<span style="left:79px;top:56px;">View</span>
<span style="left:117px;top:56px;">Tools</span>
<span style="left:158px;top:56px;">Help</span>
<span style="left:33px;top:80px;">Organize</span>
<span style="left:129px;top:80px;">Views</span>
<span class="fold" style="left:16px;top:110px;">Folders</span>
<span style="left:45px;top:131px;">Desktop</span>
<span style="left:55px;top:149px;letter-spacing:-0.25px">Administrator</span>
<span style="left:65px;top:167px;">Contacts</span>
<span style="left:65px;top:185px;">Desktop</span>
<span style="left:65px;top:203px;letter-spacing:-0.22px">Documents</span>
<span style="left:65px;top:221px;">Downloads</span>
<span style="left:75px;top:239px;">assp.mod</span>
<span style="left:85px;top:257px;color:#fff">assp.mod</span>
<span style="left:95px;top:275px;">bin</span>
<span style="left:95px;top:293px;">install</span>
<span style="left:95px;top:311px;">pdf</span>
<span style="left:75px;top:329px;letter-spacing:.4px">ASSP_2.0.1_3.0.23</span>
<span style="left:75px;top:347px;letter-spacing:.4px">ASSP_2.0.1_3.0.23</span>
<span style="left:75px;top:365px;">assp.mod.zip</span>
<span style="left:65px;top:383px;">Favorites</span>
<span style="left:65px;top:401px;">Links</span>
<span style="left:65px;top:419px;">Music</span>
<span style="left:65px;top:437px;">Pictures</span>
<span style="left:65px;top:455px;">Saved Games</span>
<span style="left:65px;top:473px;letter-spacing:-0.12px">Searches</span>
<span style="left:65px;top:491px;letter-spacing:-0.35px">Videos</span>
<span style="left:55px;top:509px;letter-spacing:-0.35px">Public</span>
<span style="left:55px;top:527px;letter-spacing:-0.32px">Computer</span>
<span style="left:55px;top:545px;">Network</span>
<span style="left:55px;top:563px;">Control Panel</span>
<span style="left:55px;top:581px;letter-spacing:-0.28px">Recycle Bin</span>
<span style="left:264px;top:105px;">Name</span>
<span style="left:404px;top:105px;">Date modified</span>
<span style="left:510px;top:105px;">Type</span>
<span style="left:614px;top:105px;">Size</span>
<div class="clip" style="width:1280px;height:979px">
<span style="left:284px;top:122px;">bin</span>
<span style="left:404px;top:122px;">5/14/2011 12:12...</span>
<span style="left:509px;top:122px;">File Folder</span>
<span style="left:284px;top:139px;">install</span>
<span style="left:404px;top:139px;">5/14/2011 12:12...</span>
<span style="left:509px;top:139px;">File Folder</span>
<span style="left:284px;top:156px;">pdf</span>
<span style="left:404px;top:156px;">5/14/2011 12:12...</span>
<span style="left:509px;top:156px;">File Folder</span>
<span style="left:284px;top:173px;">BerkeleyDB.ppd</span>
<span style="left:404px;top:173px;">5/14/2011 12:12...</span>
<span style="left:509px;top:173px;">PPD File</span>
<span style="right:614px;top:173px;">1 K</span>
<span style="left:284px;top:190px;">BerkeleyDB.tar.gz</span>
<span style="left:404px;top:190px;">5/14/2011 12:12...</span>
<span style="left:509px;top:190px;">GZ File</span>
<span style="right:614px;top:190px;">819 K</span>
<span style="left:284px;top:207px;">BerkeleyDB_588.tar.gz</span>
<span style="left:404px;top:207px;">5/14/2011 12:12...</span>
<span style="left:509px;top:207px;">GZ File</span>
<span style="right:614px;top:207px;">1,316 K</span>
<span style="left:284px;top:224px;">CAM-PDF.ppd</span>
<span style="left:404px;top:224px;">5/14/2011 12:12...</span>
<span style="left:509px;top:224px;">PPD File</span>
<span style="right:614px;top:224px;">3 K</span>
<span style="left:284px;top:241px;">CAM-PDF.tar.gz</span>
<span style="left:404px;top:241px;">5/14/2011 12:12...</span>
<span style="left:509px;top:241px;">GZ File</span>
<span style="right:614px;top:241px;">143 K</span>
<span style="left:284px;top:258px;">Compress-Raw-Zlib....</span>
<span style="left:404px;top:258px;">5/14/2011 12:12...</span>
<span style="left:509px;top:258px;">PPD File</span>
<span style="right:614px;top:258px;">1 K</span>
<span style="left:284px;top:275px;">Compress-Raw-Zlib.t...</span>
<span style="left:404px;top:275px;">5/14/2011 12:12...</span>
<span style="left:509px;top:275px;">GZ File</span>
<span style="right:614px;top:275px;">148 K</span>
<span style="left:284px;top:292px;">Crypt-RC4.ppd</span>
<span style="left:404px;top:292px;">5/14/2011 12:12...</span>
<span style="left:509px;top:292px;">PPD File</span>
<span style="right:614px;top:292px;">1 K</span>
<span style="left:284px;top:309px;">Crypt-RC4.tar.gz</span>
<span style="left:404px;top:309px;">5/14/2011 12:12...</span>
<span style="left:509px;top:309px;">GZ File</span>
<span style="right:614px;top:309px;">5 K</span>
<span style="left:284px;top:326px;">Devel-Symdump.ppd</span>
<span style="left:404px;top:326px;">5/14/2011 12:12...</span>
<span style="left:509px;top:326px;">PPD File</span>
<span style="right:614px;top:326px;">1 K</span>
<span style="left:284px;top:343px;">Devel-Symdump.tar.gz</span>
<span style="left:404px;top:343px;">5/14/2011 12:12...</span>
<span style="left:509px;top:343px;">GZ File</span>
<span style="right:614px;top:343px;">8 K</span>
<span style="left:284px;top:360px;">File-chmod.ppd</span>
<span style="left:404px;top:360px;">5/14/2011 12:12...</span>
<span style="left:509px;top:360px;">PPD File</span>
<span style="right:614px;top:360px;">1 K</span>
<span style="left:284px;top:377px;">File-chmod.tar.gz</span>
<span style="left:404px;top:377px;">5/14/2011 12:12...</span>
<span style="left:509px;top:377px;">GZ File</span>
<span style="right:614px;top:377px;">12 K</span>
<span style="left:284px;top:394px;">File-PathInfo.ppd</span>
<span style="left:404px;top:394px;">5/14/2011 12:12...</span>
<span style="left:509px;top:394px;">PPD File</span>
<span style="right:614px;top:394px;">1 K</span>
<span style="left:284px;top:411px;">File-PathInfo.tar.gz</span>
<span style="left:404px;top:411px;">5/14/2011 12:12...</span>
<span style="left:509px;top:411px;">GZ File</span>
<span style="right:614px;top:411px;">16 K</span>
<span style="left:284px;top:428px;">File-PathInfo-Ext.ppd</span>
<span style="left:404px;top:428px;">5/14/2011 12:12...</span>
<span style="left:509px;top:428px;">PPD File</span>
<span style="right:614px;top:428px;">1 K</span>
<span style="left:284px;top:445px;">File-PathInfo-Ext.tar...</span>
<span style="left:404px;top:445px;">5/14/2011 12:12...</span>
<span style="left:509px;top:445px;">GZ File</span>
<span style="right:614px;top:445px;">11 K</span>
<span style="left:284px;top:462px;">File-Scan-ClamAV.ppd</span>
<span style="left:404px;top:462px;">5/14/2011 12:12...</span>
<span style="left:509px;top:462px;">PPD File</span>
<span style="right:614px;top:462px;">1 K</span>
<span style="left:284px;top:479px;">File-Scan-ClamAV.ta...</span>
<span style="left:404px;top:479px;">5/14/2011 12:12...</span>
<span style="left:509px;top:479px;">GZ File</span>
<span style="right:614px;top:479px;">7 K</span>
<span style="left:284px;top:496px;">Getopt-Std-Strict.ppd</span>
<span style="left:404px;top:496px;">5/14/2011 12:12...</span>
<span style="left:509px;top:496px;">PPD File</span>
<span style="right:614px;top:496px;">1 K</span>
<span style="left:284px;top:513px;">Getopt-Std-Strict.tar...</span>
<span style="left:404px;top:513px;">5/14/2011 12:12...</span>
<span style="left:509px;top:513px;">GZ File</span>
<span style="right:614px;top:513px;">4 K</span>
<span style="left:284px;top:530px;">Image-OCR-Tessera...</span>
<span style="left:404px;top:530px;">5/14/2011 12:12...</span>
<span style="left:509px;top:530px;">PPD File</span>
<span style="right:614px;top:530px;">1 K</span>
<span style="left:284px;top:547px;">Image-OCR-Tessera...</span>
<span style="left:404px;top:547px;">5/14/2011 12:12...</span>
<span style="left:509px;top:547px;">GZ File</span>
<span style="right:614px;top:547px;">8 K</span>
<span style="left:284px;top:564px;">IO-Compress-Base.ppd</span>
<span style="left:404px;top:564px;">5/14/2011 12:12...</span>
<span style="left:509px;top:564px;">PPD File</span>
<span style="right:614px;top:564px;">1 K</span>
<span style="left:284px;top:581px;">IO-Compress-Base.t...</span>
<span style="left:404px;top:581px;">5/14/2011 12:12...</span>
<span style="left:509px;top:581px;">GZ File</span>
<span style="right:614px;top:581px;">53 K</span>
<span style="left:284px;top:598px;">IO-Compress-Zlib.ppd</span>
<span style="left:404px;top:598px;">5/14/2011 12:12...</span>
<span style="left:509px;top:598px;">PPD File</span>
<span style="right:614px;top:598px;">2 K</span>
<span style="left:284px;top:615px;">IO-Compress-Zlib.ta...</span>
<span style="left:404px;top:615px;">5/14/2011 12:12...</span>
<span style="left:509px;top:615px;">GZ File</span>
<span style="right:614px;top:615px;">165 K</span>
<span style="left:284px;top:632px;">IO-Socket-SSL.ppd</span>
<span style="left:404px;top:632px;">5/14/2011 12:12...</span>
<span style="left:509px;top:632px;">PPD File</span>
<span style="right:614px;top:632px;">1 K</span>
<span style="left:284px;top:649px;">IO-Socket-SSL.tar.gz</span>
<span style="left:404px;top:649px;">5/14/2011 12:12...</span>
<span style="left:509px;top:649px;">GZ File</span>
<span style="right:614px;top:649px;">44 K</span>
<span style="left:284px;top:666px;">LEOCHARRE-Class2....</span>
<span style="left:404px;top:666px;">5/14/2011 12:12...</span>
<span style="left:509px;top:666px;">PPD File</span>
<span style="right:614px;top:666px;">1 K</span>
<span style="left:284px;top:683px;">LEOCHARRE-Class2....</span>
<span style="left:404px;top:683px;">5/14/2011 12:12...</span>
<span style="left:509px;top:683px;">GZ File</span>
<span style="right:614px;top:683px;">12 K</span>
<span style="left:284px;top:700px;">LEOCHARRE-CLI.ppd</span>
<span style="left:404px;top:700px;">5/14/2011 12:12...</span>
<span style="left:509px;top:700px;">PPD File</span>
<span style="right:614px;top:700px;">2 K</span>
<span style="left:284px;top:717px;">LEOCHARRE-CLI.tar...</span>
<span style="left:404px;top:717px;">5/14/2011 12:12...</span>
<span style="left:509px;top:717px;">GZ File</span>
<span style="right:614px;top:717px;">7 K</span>
<span style="left:284px;top:734px;">LEOCHARRE-CLI2.ppd</span>
<span style="left:404px;top:734px;">5/14/2011 12:12...</span>
<span style="left:509px;top:734px;">PPD File</span>
<span style="right:614px;top:734px;">1 K</span>
<span style="left:284px;top:751px;">LEOCHARRE-CLI2.ta...</span>
<span style="left:404px;top:751px;">5/14/2011 12:12...</span>
<span style="left:509px;top:751px;">GZ File</span>
<span style="right:614px;top:751px;">9 K</span>
<span style="left:284px;top:768px;">LEOCHARRE-Debug....</span>
<span style="left:404px;top:768px;">5/14/2011 12:12...</span>
<span style="left:509px;top:768px;">PPD File</span>
<span style="right:614px;top:768px;">1 K</span>
<span style="left:284px;top:785px;">LEOCHARRE-Debug....</span>
<span style="left:404px;top:785px;">5/14/2011 12:12...</span>
<span style="left:509px;top:785px;">GZ File</span>
<span style="right:614px;top:785px;">8 K</span>
<span style="left:284px;top:802px;">LEOCHARRE-Dir.ppd</span>
<span style="left:404px;top:802px;">5/14/2011 12:12...</span>
<span style="left:509px;top:802px;">PPD File</span>
<span style="right:614px;top:802px;">1 K</span>
<span style="left:284px;top:819px;">LEOCHARRE-Dir.tar.gz</span>
<span style="left:404px;top:819px;">5/14/2011 12:12...</span>
<span style="left:509px;top:819px;">GZ File</span>
<span style="right:614px;top:819px;">4 K</span>
<span style="left:284px;top:836px;">Linux-usermod.ppd</span>
<span style="left:404px;top:836px;">5/14/2011 12:12...</span>
<span style="left:509px;top:836px;">PPD File</span>
<span style="right:614px;top:836px;">1 K</span>
<span style="left:284px;top:853px;">Linux-usermod.tar.gz</span>
<span style="left:404px;top:853px;">5/14/2011 12:12...</span>
<span style="left:509px;top:853px;">GZ File</span>
<span style="right:614px;top:853px;">10 K</span>
<span style="left:284px;top:870px;">Mail-DKIM.ppd</span>
<span style="left:404px;top:870px;">5/14/2011 12:12...</span>
<span style="left:509px;top:870px;">PPD File</span>
<span style="right:614px;top:870px;">5 K</span>
<span style="left:284px;top:887px;">Mail-DKIM.tar.gz</span>
<span style="left:404px;top:887px;">5/14/2011 12:12...</span>
<span style="left:509px;top:887px;">GZ File</span>
<span style="right:614px;top:887px;">89 K</span>
<span style="left:284px;top:904px;">Mail-SPF.ppd</span>
<span style="left:404px;top:904px;">5/14/2011 12:12...</span>
<span style="left:509px;top:904px;">PPD File</span>
<span style="right:614px;top:904px;">4 K</span>
<span style="left:284px;top:921px;">Mail-SPF.tar.gz</span>
<span style="left:404px;top:921px;">5/14/2011 12:12...</span>
<span style="left:509px;top:921px;">GZ File</span>
<span style="right:614px;top:921px;">179 K</span>
<span style="left:284px;top:938px;">Mail-SPF-Query.ppd</span>
<span style="left:404px;top:938px;">5/14/2011 12:12...</span>
<span style="left:509px;top:938px;">PPD File</span>
<span style="right:614px;top:938px;">2 K</span>
<span style="left:284px;top:955px;">Mail-SPF-Query.tar.gz</span>
<span style="left:404px;top:955px;">5/14/2011 12:12...</span>
<span style="left:509px;top:955px;">GZ File</span>
<span style="right:614px;top:955px;">31 K</span>
<span style="left:284px;top:972px;">Mail-SPS.ppd</span>
<span style="left:404px;top:972px;">5/14/2011 12:12...</span>
<span style="left:509px;top:972px;">PPD File</span>
<span style="right:614px;top:972px;">2 K</span></div>
<span class="bold" style="left:712px;top:5px;color:#d4d1ca">assp</span>
<span style="left:803px;top:32px;letter-spacing:-.15px">Local Disk (C:)</span>
<span style="left:888px;top:32px;">assp</span>
<span style="left:1039px;top:34px;color:#808080">Search</span>
<span style="left:699px;top:61px;color:#808080;text-shadow:1px 1px 0 #fff">File</span>
<span style="left:731px;top:61px;color:#808080;text-shadow:1px 1px 0 #fff">Edit</span>
<span style="left:766px;top:61px;color:#808080;text-shadow:1px 1px 0 #fff">View</span>
<span style="left:804px;top:61px;color:#808080;text-shadow:1px 1px 0 #fff">Tools</span>
<span style="left:845px;top:61px;color:#808080;text-shadow:1px 1px 0 #fff">Help</span>
<span style="left:720px;top:85px;">Organize</span>
<span style="left:816px;top:85px;">Views</span>
<span style="left:899px;top:85px;">Open</span>
<span class="fold" style="left:703px;top:115px;">Folders</span>
<span style="left:722px;top:136px;">Desktop</span>
<span style="left:732px;top:154px;letter-spacing:-0.25px">Administrator</span>
<span style="left:732px;top:172px;letter-spacing:-0.35px">Public</span>
<span style="left:732px;top:190px;letter-spacing:-0.32px">Computer</span>
<span style="left:742px;top:208px;">Floppy Disk Drive (A:)</span>
<span style="left:742px;top:226px;">Local Disk (C:)</span>
<span style="left:752px;top:244px;">Assp</span>
<span style="left:762px;top:262px;">certs</span>
<span style="left:762px;top:280px;">dkim</span>
<span style="left:762px;top:298px;">docs</span>
<span style="left:762px;top:316px;">files</span>
<span style="left:762px;top:334px;">images</span>
<span style="left:762px;top:352px;">language</span>
<span style="left:762px;top:370px;">lib</span>
<span style="left:762px;top:388px;">logs</span>
<span style="left:762px;top:406px;">mib</span>
<span style="left:762px;top:424px;">notes</span>
<span style="left:762px;top:442px;">Plugins</span>
<span style="left:762px;top:460px;">rc</span>
<span style="left:762px;top:478px;">reports</span>
<span style="left:762px;top:496px;letter-spacing:-0.3px">resendmail</span>
<span style="left:762px;top:514px;">virus</span>
<span style="left:762px;top:532px;">virusscan</span>
<span style="left:752px;top:550px;">PerfLogs</span>
<span style="left:752px;top:568px;">Perl</span>
<span style="left:752px;top:586px;letter-spacing:-0.17px">Program Files</span>
<span style="left:752px;top:604px;">Users</span>
<span style="left:752px;top:622px;">Windows</span>
<span style="left:742px;top:640px;">CD Drive (D:)</span>
<span style="left:732px;top:658px;">Network</span>
<span style="left:732px;top:676px;">Control Panel</span>
<span style="left:732px;top:694px;letter-spacing:-0.28px">Recycle Bin</span>
<span style="left:928px;top:110px;">Name</span>
<span style="left:1068px;top:110px;">Date modified</span>
<span style="left:1174px;top:110px;">Type</span>
<span style="left:948px;top:127px;">certs</span>
<span style="left:1069px;top:127px;">4/5/2009 11:37 AM</span>
<span style="left:1174px;top:127px;">File Folder</span>
<span style="left:948px;top:144px;">dkim</span>
<span style="left:1069px;top:144px;">5/14/2011 12:07...</span>
<span style="left:1174px;top:144px;">File Folder</span>
<span style="left:948px;top:161px;">docs</span>
<span style="left:1069px;top:161px;">5/14/2011 12:07...</span>
<span style="left:1174px;top:161px;">File Folder</span>
<span style="left:948px;top:178px;">files</span>
<span style="left:1069px;top:178px;">5/14/2011 12:07...</span>
<span style="left:1174px;top:178px;">File Folder</span>
<span style="left:948px;top:195px;">images</span>
<span style="left:1069px;top:195px;">5/14/2011 12:07...</span>
<span style="left:1174px;top:195px;">File Folder</span>
<span style="left:948px;top:212px;">language</span>
<span style="left:1069px;top:212px;">5/14/2011 12:07...</span>
<span style="left:1174px;top:212px;">File Folder</span>
<span style="left:948px;top:229px;">lib</span>
<span style="left:1069px;top:229px;">5/14/2011 12:07...</span>
<span style="left:1174px;top:229px;">File Folder</span>
<span style="left:948px;top:246px;">logs</span>
<span style="left:1069px;top:246px;">5/4/2007 10:46 AM</span>
<span style="left:1174px;top:246px;">File Folder</span>
<span style="left:948px;top:263px;">mib</span>
<span style="left:1069px;top:263px;">5/14/2011 12:07...</span>
<span style="left:1174px;top:263px;">File Folder</span>
<span style="left:948px;top:280px;">notes</span>
<span style="left:1069px;top:280px;">5/14/2011 12:07...</span>
<span style="left:1174px;top:280px;">File Folder</span>
<span style="left:948px;top:297px;">Plugins</span>
<span style="left:1069px;top:297px;">12/18/2009 7:23...</span>
<span style="left:1174px;top:297px;">File Folder</span>
<span style="left:948px;top:314px;">rc</span>
<span style="left:1069px;top:314px;">5/14/2011 11:49...</span>
<span style="left:1174px;top:314px;">File Folder</span>
<span style="left:948px;top:331px;">reports</span>
<span style="left:1069px;top:331px;">5/14/2011 12:07...</span>
<span style="left:1174px;top:331px;">File Folder</span>
<span style="left:948px;top:348px;letter-spacing:-0.3px">resendmail</span>
<span style="left:1069px;top:348px;">7/27/2009 8:32 PM</span>
<span style="left:1174px;top:348px;">File Folder</span>
<span style="left:948px;top:365px;">virus</span>
<span style="left:1069px;top:365px;">11/10/2009 1:00...</span>
<span style="left:1174px;top:365px;">File Folder</span>
<span style="left:948px;top:382px;">virusscan</span>
<span style="left:1069px;top:382px;">12/18/2009 4:56...</span>
<span style="left:1174px;top:382px;">File Folder</span>
<span style="left:948px;top:399px;">assp.cfg</span>
<span style="left:1069px;top:399px;">5/14/2011 11:49...</span>
<span style="left:1174px;top:399px;">CFG File</span>
<span style="left:948px;top:416px;">assp</span>
<span style="left:1069px;top:416px;">5/14/2011 11:49...</span>
<span style="left:1174px;top:416px;">PL File</span>
<span style="left:948px;top:433px;">assp_db_import.cfg</span>
<span style="left:1069px;top:433px;">5/14/2011 11:49...</span>
<span style="left:1174px;top:433px;">CFG File</span>
<span style="left:948px;top:450px;">assp_pop3</span>
<span style="left:1069px;top:450px;">5/14/2011 11:49...</span>
<span style="left:1174px;top:450px;">PL File</span>
<span style="left:948px;top:467px;">assp_sync.cfg</span>
<span style="left:1069px;top:467px;">5/14/2011 11:49...</span>
<span style="left:1174px;top:467px;">CFG File</span>
<span style="left:948px;top:484px;">assp-monitor</span>
<span style="left:1069px;top:484px;">5/14/2011 11:49...</span>
<span style="left:1174px;top:484px;">PL File</span>
<span style="left:948px;top:501px;">changelog</span>
<span style="left:1069px;top:501px;">5/14/2011 11:49...</span>
<span style="left:1174px;top:501px;letter-spacing:-0.2px">Text Document</span>
<span style="left:948px;top:518px;">version</span>
<span style="left:1069px;top:518px;">5/14/2011 11:49...</span>
<span style="left:1174px;top:518px;letter-spacing:-0.2px">Text Document</span>
<span class="bold" style="left:21px;top:1005px;">Start</span>
<span style="left:196px;top:1005px;">Download Anti-Spam SM...</span>
<span style="left:359px;top:1005px;">ASSP_2.0.1_3.0.23</span>
<span style="left:522px;top:1005px;">assp</span>
<span class="bold" style="left:686px;top:1006px;">assp.mod</span>
<span style="left:848px;top:1005px;">Win32-quickstart-guide -...</span>
<span style="left:1224px;top:1005px;">12:13 PM</span></div>
<div class="L" id="mbg">
<div style="left:117px;top:262px;width:169px;height:307px;background:#d4d1ca;"></div>
<svg class="ic" style="left:117px;top:262px" width="169" height="307" shape-rendering="crispEdges"><rect width="169" height="307" fill="url(#dth)"/></svg>
<div style="left:117px;top:262px;width:169px;height:1px;background:#8a8a86;"></div>
<div style="left:117px;top:568px;width:169px;height:1px;background:#8a8a86;"></div>
<div style="left:117px;top:262px;width:1px;height:307px;background:#8a8a86;"></div>
<div style="left:285px;top:262px;width:1px;height:307px;background:#8a8a86;"></div>
<div style="left:121px;top:285px;width:161px;height:1px;background:#808080;"></div>
<div style="left:121px;top:286px;width:161px;height:1px;background:#ffffff;"></div>
<div style="left:273px;top:330px;width:1px;height:7px;background:#000;"></div>
<div style="left:274px;top:331px;width:1px;height:5px;background:#000;"></div>
<div style="left:275px;top:332px;width:1px;height:3px;background:#000;"></div>
<div style="left:276px;top:333px;width:1px;height:1px;background:#000;"></div>
<div style="left:121px;top:345px;width:161px;height:1px;background:#808080;"></div>
<div style="left:121px;top:346px;width:161px;height:1px;background:#ffffff;"></div>
<div style="left:121px;top:388px;width:161px;height:1px;background:#808080;"></div>
<div style="left:121px;top:389px;width:161px;height:1px;background:#ffffff;"></div>
<div style="left:273px;top:399px;width:1px;height:7px;background:#000;"></div>
<div style="left:274px;top:400px;width:1px;height:5px;background:#000;"></div>
<div style="left:275px;top:401px;width:1px;height:3px;background:#000;"></div>
<div style="left:276px;top:402px;width:1px;height:1px;background:#000;"></div>
<div style="left:121px;top:414px;width:161px;height:1px;background:#808080;"></div>
<div style="left:121px;top:415px;width:161px;height:1px;background:#ffffff;"></div>
<div style="left:120px;top:437px;width:163px;height:17px;background:#0a246a;"></div>
<div style="left:121px;top:474px;width:161px;height:1px;background:#808080;"></div>
<div style="left:121px;top:475px;width:161px;height:1px;background:#ffffff;"></div>
<div style="left:121px;top:517px;width:161px;height:1px;background:#808080;"></div>
<div style="left:121px;top:518px;width:161px;height:1px;background:#ffffff;"></div>
<div style="left:273px;top:528px;width:1px;height:7px;background:#000;"></div>
<div style="left:274px;top:529px;width:1px;height:5px;background:#000;"></div>
<div style="left:275px;top:530px;width:1px;height:3px;background:#000;"></div>
<div style="left:276px;top:531px;width:1px;height:1px;background:#000;"></div>
<div style="left:121px;top:543px;width:161px;height:1px;background:#808080;"></div>
<div style="left:121px;top:544px;width:161px;height:1px;background:#ffffff;"></div></div>
<div class="L T" id="mtx">
<span class="bold" style="left:136px;top:267px;">Collapse</span>
<span style="left:136px;top:293px;">Explore</span>
<span style="left:136px;top:310px;">Open</span>
<span style="left:136px;top:327px;">7-Zip</span>
<span style="left:136px;top:353px;">Share...</span>
<span style="left:136px;top:370px;">Restore previous versions</span>
<span style="left:136px;top:396px;">Send To</span>
<span style="left:136px;top:422px;">Cut</span>
<span style="left:136px;top:439px;color:#fff">Copy</span>
<span style="left:136px;top:456px;">Paste</span>
<span style="left:136px;top:482px;">Delete</span>
<span style="left:136px;top:499px;">Rename</span>
<span style="left:136px;top:525px;">New</span>
<span style="left:136px;top:551px;">Properties</span></div>
<div class="L" id="top">
<div style="left:175px;top:445px;width:2px;height:1px;background:#000;"></div>
<div style="left:174px;top:446px;width:1px;height:1px;background:#000;"></div>
<div style="left:175px;top:446px;width:2px;height:1px;background:#fff;"></div>
<div style="left:177px;top:446px;width:1px;height:1px;background:#000;"></div>
<div style="left:174px;top:447px;width:1px;height:1px;background:#000;"></div>
<div style="left:175px;top:447px;width:2px;height:1px;background:#fff;"></div>
<div style="left:177px;top:447px;width:1px;height:1px;background:#000;"></div>
<div style="left:174px;top:448px;width:1px;height:1px;background:#000;"></div>
<div style="left:175px;top:448px;width:2px;height:1px;background:#fff;"></div>
<div style="left:177px;top:448px;width:1px;height:1px;background:#000;"></div>
<div style="left:174px;top:449px;width:1px;height:1px;background:#000;"></div>
<div style="left:175px;top:449px;width:2px;height:1px;background:#fff;"></div>
<div style="left:177px;top:449px;width:1px;height:1px;background:#000;"></div>
<div style="left:174px;top:450px;width:1px;height:1px;background:#000;"></div>
<div style="left:175px;top:450px;width:2px;height:1px;background:#fff;"></div>
<div style="left:177px;top:450px;width:3px;height:1px;background:#000;"></div>
<div style="left:174px;top:451px;width:1px;height:1px;background:#000;"></div>
<div style="left:175px;top:451px;width:2px;height:1px;background:#fff;"></div>
<div style="left:177px;top:451px;width:1px;height:1px;background:#000;"></div>
<div style="left:178px;top:451px;width:2px;height:1px;background:#fff;"></div>
<div style="left:180px;top:451px;width:3px;height:1px;background:#000;"></div>
<div style="left:174px;top:452px;width:1px;height:1px;background:#000;"></div>
<div style="left:175px;top:452px;width:2px;height:1px;background:#fff;"></div>
<div style="left:177px;top:452px;width:1px;height:1px;background:#000;"></div>
<div style="left:178px;top:452px;width:2px;height:1px;background:#fff;"></div>
<div style="left:180px;top:452px;width:1px;height:1px;background:#000;"></div>
<div style="left:181px;top:452px;width:2px;height:1px;background:#fff;"></div>
<div style="left:183px;top:452px;width:2px;height:1px;background:#000;"></div>
<div style="left:174px;top:453px;width:1px;height:1px;background:#000;"></div>
<div style="left:175px;top:453px;width:2px;height:1px;background:#fff;"></div>
<div style="left:177px;top:453px;width:1px;height:1px;background:#000;"></div>
<div style="left:178px;top:453px;width:2px;height:1px;background:#fff;"></div>
<div style="left:180px;top:453px;width:1px;height:1px;background:#000;"></div>
<div style="left:181px;top:453px;width:2px;height:1px;background:#fff;"></div>
<div style="left:183px;top:453px;width:1px;height:1px;background:#000;"></div>
<div style="left:184px;top:453px;width:1px;height:1px;background:#fff;"></div>
<div style="left:185px;top:453px;width:1px;height:1px;background:#000;"></div>
<div style="left:170px;top:454px;width:3px;height:1px;background:#000;"></div>
<div style="left:174px;top:454px;width:1px;height:1px;background:#000;"></div>
<div style="left:175px;top:454px;width:2px;height:1px;background:#fff;"></div>
<div style="left:177px;top:454px;width:1px;height:1px;background:#000;"></div>
<div style="left:178px;top:454px;width:2px;height:1px;background:#fff;"></div>
<div style="left:180px;top:454px;width:1px;height:1px;background:#000;"></div>
<div style="left:181px;top:454px;width:2px;height:1px;background:#fff;"></div>
<div style="left:183px;top:454px;width:1px;height:1px;background:#000;"></div>
<div style="left:184px;top:454px;width:2px;height:1px;background:#fff;"></div>
<div style="left:186px;top:454px;width:1px;height:1px;background:#000;"></div>
<div style="left:170px;top:455px;width:1px;height:1px;background:#000;"></div>
<div style="left:171px;top:455px;width:2px;height:1px;background:#fff;"></div>
<div style="left:173px;top:455px;width:2px;height:1px;background:#000;"></div>
<div style="left:175px;top:455px;width:8px;height:1px;background:#fff;"></div>
<div style="left:183px;top:455px;width:1px;height:1px;background:#000;"></div>
<div style="left:184px;top:455px;width:2px;height:1px;background:#fff;"></div>
<div style="left:186px;top:455px;width:1px;height:1px;background:#000;"></div>
<div style="left:170px;top:456px;width:1px;height:1px;background:#000;"></div>
<div style="left:171px;top:456px;width:3px;height:1px;background:#fff;"></div>
<div style="left:174px;top:456px;width:1px;height:1px;background:#000;"></div>
<div style="left:175px;top:456px;width:11px;height:1px;background:#fff;"></div>
<div style="left:186px;top:456px;width:1px;height:1px;background:#000;"></div>
<div style="left:171px;top:457px;width:1px;height:1px;background:#000;"></div>
<div style="left:172px;top:457px;width:2px;height:1px;background:#fff;"></div>
<div style="left:174px;top:457px;width:1px;height:1px;background:#000;"></div>
<div style="left:175px;top:457px;width:11px;height:1px;background:#fff;"></div>
<div style="left:186px;top:457px;width:1px;height:1px;background:#000;"></div>
<div style="left:172px;top:458px;width:1px;height:1px;background:#000;"></div>
<div style="left:173px;top:458px;width:1px;height:1px;background:#fff;"></div>
<div style="left:174px;top:458px;width:1px;height:1px;background:#000;"></div>
<div style="left:175px;top:458px;width:11px;height:1px;background:#fff;"></div>
<div style="left:186px;top:458px;width:1px;height:1px;background:#000;"></div>
<div style="left:172px;top:459px;width:1px;height:1px;background:#000;"></div>
<div style="left:173px;top:459px;width:13px;height:1px;background:#fff;"></div>
<div style="left:186px;top:459px;width:1px;height:1px;background:#000;"></div>
<div style="left:173px;top:460px;width:1px;height:1px;background:#000;"></div>
<div style="left:174px;top:460px;width:12px;height:1px;background:#fff;"></div>
<div style="left:186px;top:460px;width:1px;height:1px;background:#000;"></div>
<div style="left:173px;top:461px;width:1px;height:1px;background:#000;"></div>
<div style="left:174px;top:461px;width:11px;height:1px;background:#fff;"></div>
<div style="left:185px;top:461px;width:1px;height:1px;background:#000;"></div>
<div style="left:174px;top:462px;width:1px;height:1px;background:#000;"></div>
<div style="left:175px;top:462px;width:10px;height:1px;background:#fff;"></div>
<div style="left:185px;top:462px;width:1px;height:1px;background:#000;"></div>
<div style="left:174px;top:463px;width:1px;height:1px;background:#000;"></div>
<div style="left:175px;top:463px;width:10px;height:1px;background:#fff;"></div>
<div style="left:185px;top:463px;width:1px;height:1px;background:#000;"></div>
<div style="left:175px;top:464px;width:1px;height:1px;background:#000;"></div>
<div style="left:176px;top:464px;width:8px;height:1px;background:#fff;"></div>
<div style="left:184px;top:464px;width:1px;height:1px;background:#000;"></div>
<div style="left:175px;top:465px;width:1px;height:1px;background:#000;"></div>
<div style="left:176px;top:465px;width:8px;height:1px;background:#fff;"></div>
<div style="left:184px;top:465px;width:1px;height:1px;background:#000;"></div>
<div style="left:175px;top:466px;width:10px;height:1px;background:#000;"></div></div>
</body></html>
